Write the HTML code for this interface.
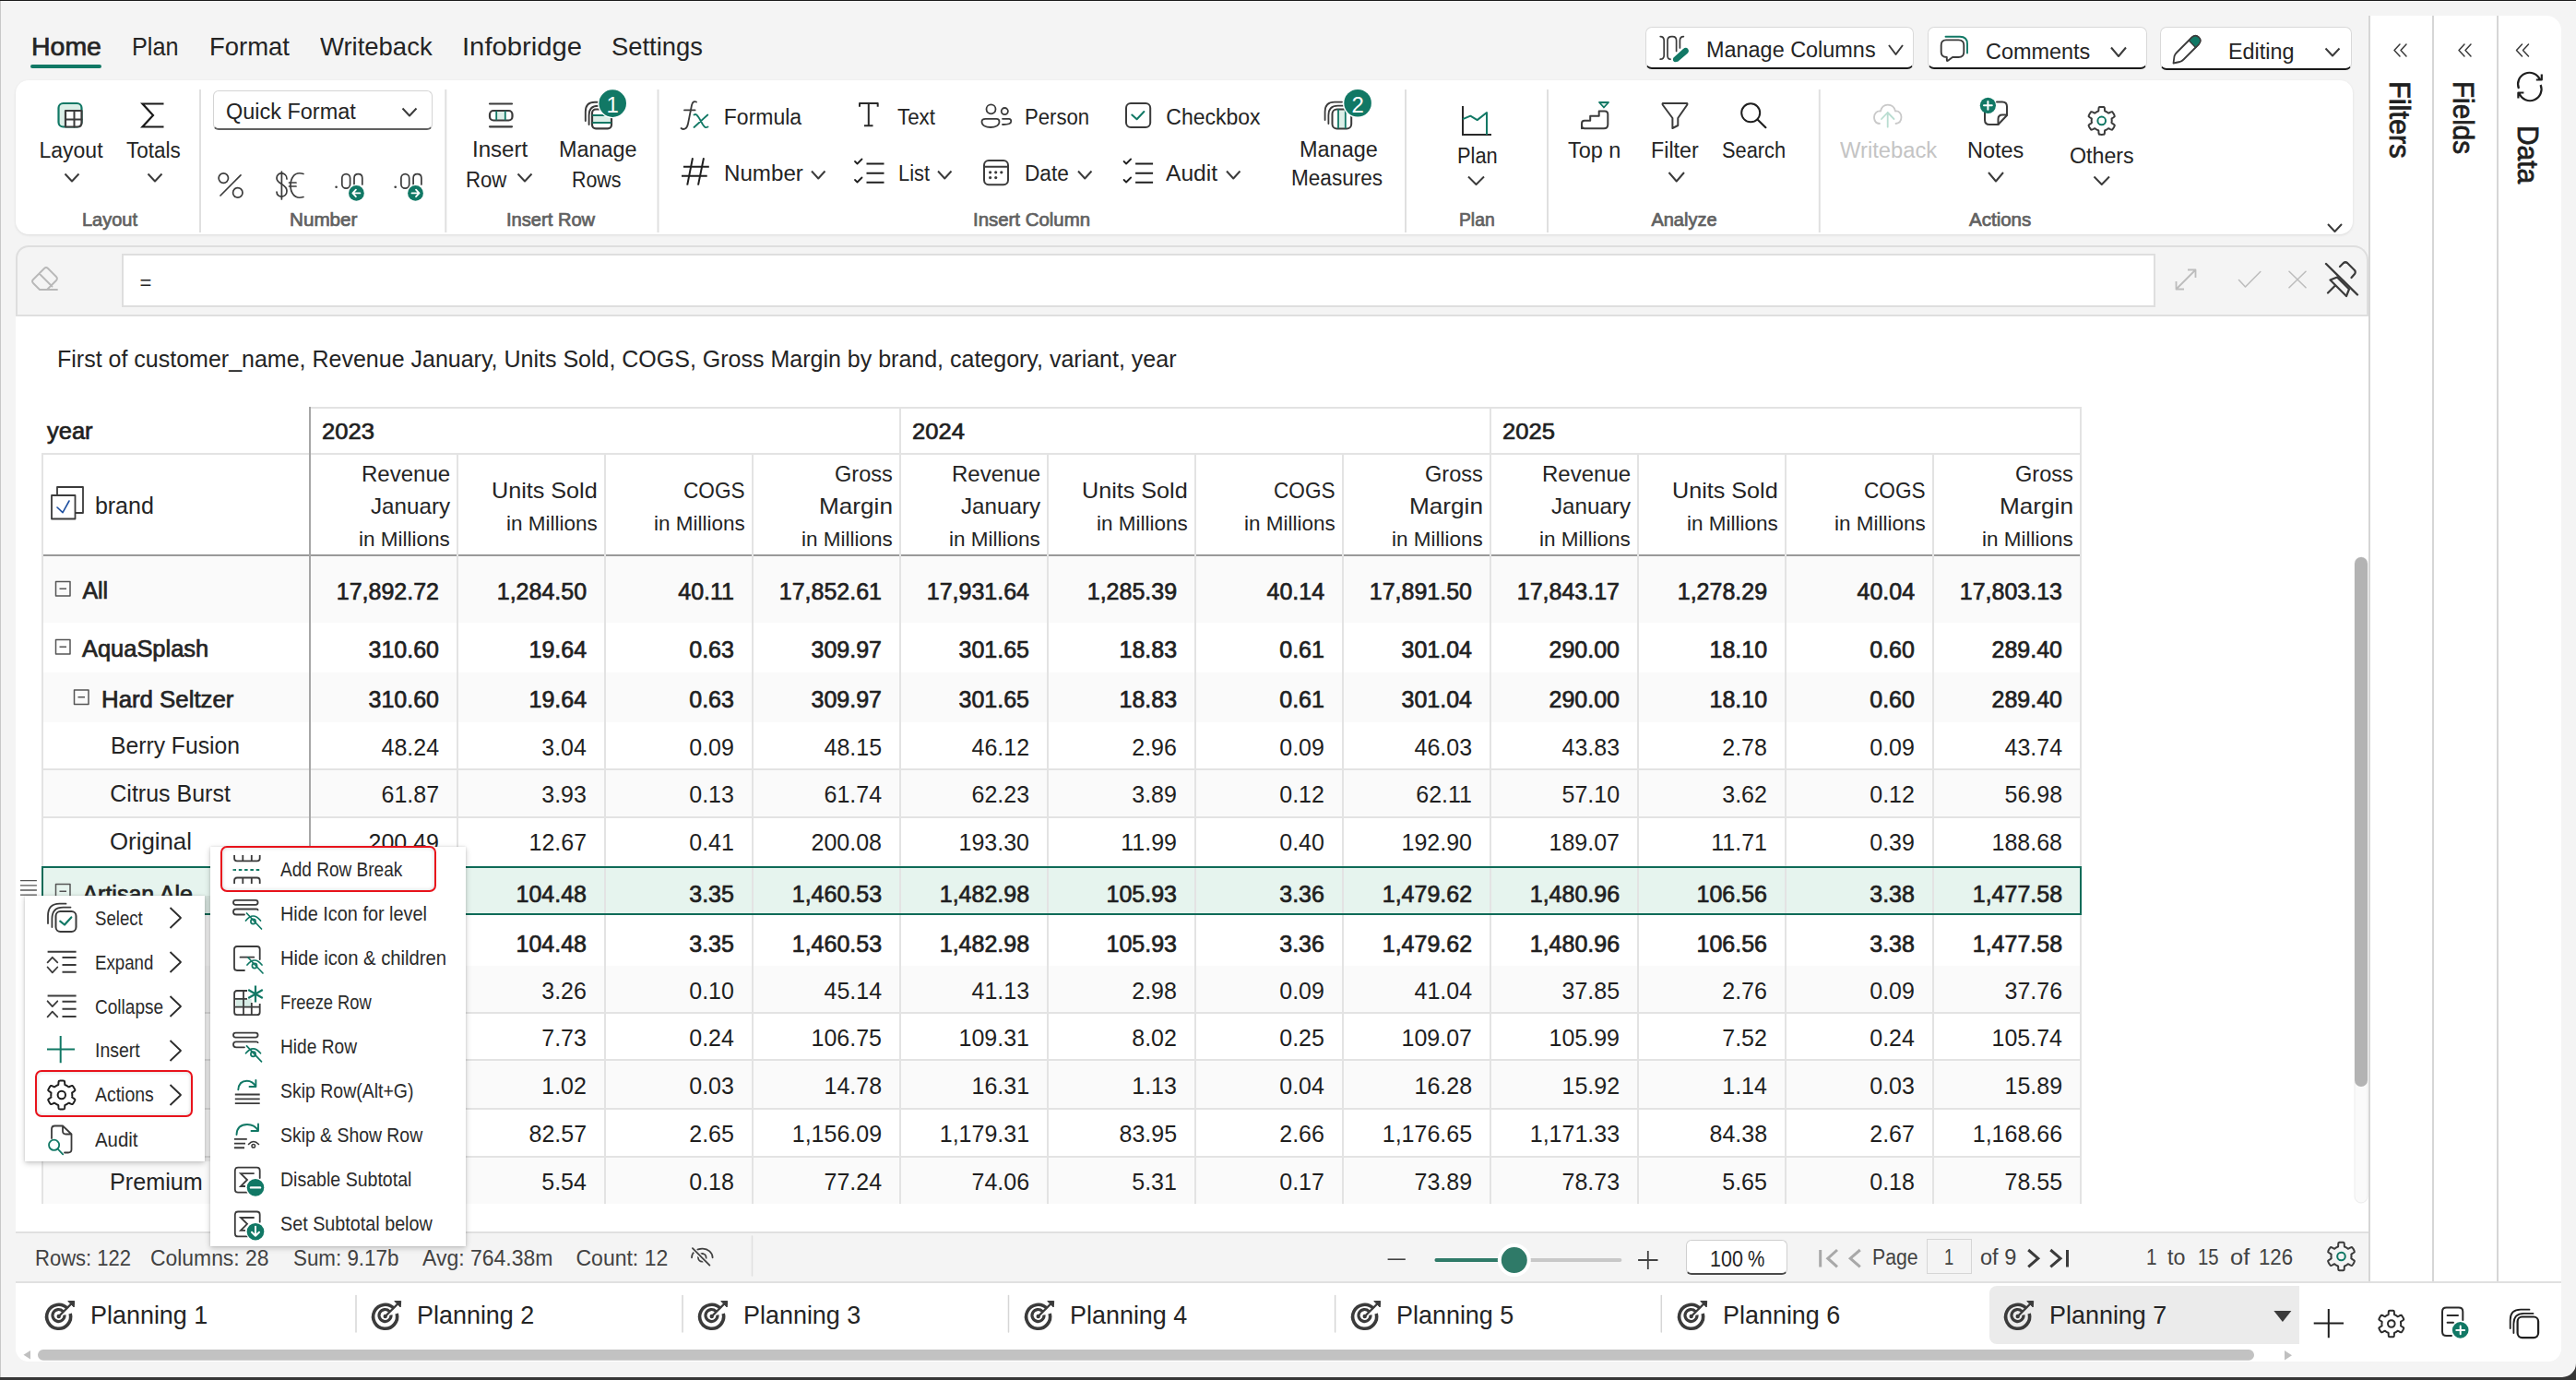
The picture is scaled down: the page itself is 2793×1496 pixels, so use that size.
<!DOCTYPE html>
<html><head><meta charset="utf-8"><style>
html,body{margin:0;padding:0;}
body{width:2793px;height:1496px;position:relative;overflow:hidden;background:#f4f4f4;font-family:"Liberation Sans",sans-serif;}
.t{position:absolute;white-space:pre;line-height:1;}
.b{position:absolute;box-sizing:border-box;}
</style></head><body>
<div class="b" style="left:0px;top:0px;width:2793px;height:1px;background:#1c1c1c"></div>
<div class="b" style="left:0px;top:1px;width:1px;height:1496px;background:#c8c8c8"></div>
<div class="b" style="left:0px;top:1493px;width:2793px;height:3px;background:#363636"></div>
<svg class="b" style="left:2770px;top:1470px" width="23" height="26"><path d="M8,23 A15,15 0 0,0 23,8 L23,26 L8,26 Z" fill="#363636"/></svg>
<div class="t" style="left:34.00px;top:37.30px;font-size:28px;font-weight:normal;color:#242424;transform:scaleX(1.0167);transform-origin:0 0;-webkit-text-stroke:0.7px #242424;">Home</div>
<div class="b" style="left:33px;top:70px;width:77px;height:4px;background:#117865;border-radius:2px"></div>
<div class="t" style="left:143.00px;top:37.30px;font-size:28px;font-weight:normal;color:#242424;transform:scaleX(0.9018);transform-origin:0 0;">Plan</div>
<div class="t" style="left:227.00px;top:37.30px;font-size:28px;font-weight:normal;color:#242424;transform:scaleX(0.9803);transform-origin:0 0;">Format</div>
<div class="t" style="left:347.40px;top:37.30px;font-size:28px;font-weight:normal;color:#242424;transform:scaleX(0.9811);transform-origin:0 0;">Writeback</div>
<div class="t" style="left:501.00px;top:37.30px;font-size:28px;font-weight:normal;color:#242424;transform:scaleX(1.0442);transform-origin:0 0;">Infobridge</div>
<div class="t" style="left:663.00px;top:37.30px;font-size:28px;font-weight:normal;color:#242424;transform:scaleX(0.9778);transform-origin:0 0;">Settings</div>
<div class="b" style="left:17px;top:87px;width:2534px;height:167px;background:#fff;border-radius:14px;box-shadow:0 1px 3px rgba(0,0,0,0.10)"></div>
<div class="b" style="left:2568px;top:17px;width:209px;height:1373px;background:#fff;border-top-right-radius:16px"></div>
<div class="b" style="left:2568px;top:17px;width:2px;height:1373px;background:#d6d6d6"></div>
<div class="b" style="left:2637px;top:17px;width:2px;height:1373px;background:#d6d6d6"></div>
<div class="b" style="left:2707px;top:17px;width:2px;height:1373px;background:#d6d6d6"></div>
<div class="b" style="left:17px;top:266px;width:2551px;height:77px;background:#f4f4f4;border:2px solid #dedede;border-bottom:none;border-radius:14px 16px 0 0"></div>
<div class="b" style="left:17px;top:341px;width:2551px;height:2px;background:#dedede"></div>
<div class="b" style="left:132px;top:275px;width:2205px;height:58px;background:#fff;border:2px solid #dedede"></div>
<div class="b" style="left:17px;top:343px;width:2551px;height:993px;background:#fff"></div>
<div class="b" style="left:17px;top:1335px;width:2551px;height:55px;background:#f4f4f4;border-top:2px solid #e0e0e0"></div>
<div class="b" style="left:17px;top:1389px;width:2760px;height:87px;background:#fff;border-top:2px solid #e0e0e0;border-radius:0 0 14px 14px"></div>
<div class="b" style="left:230.5px;top:97.7px;width:238px;height:43px;background:#fff;border:1.5px solid #d4d4d4;border-bottom:2px solid #616161;border-radius:6px"></div>
<div class="b" style="left:1784.3px;top:29.3px;width:291.0000000000002px;height:46.0px;background:#fff;border:1.5px solid #d9d9d9;border-bottom:2.5px solid #1a1a1a;border-radius:7px"></div>
<div class="b" style="left:2090.2px;top:29.3px;width:237.80000000000018px;height:46.0px;background:#fff;border:1.5px solid #d9d9d9;border-bottom:2.5px solid #1a1a1a;border-radius:7px"></div>
<div class="b" style="left:2342.3px;top:29px;width:207.5px;height:46.5px;background:#fff;border:1.5px solid #d9d9d9;border-bottom:2.5px solid #1a1a1a;border-radius:7px"></div>
<div class="t" style="left:42.50px;top:151.83px;font-size:23px;font-weight:normal;color:#242424;">Layout</div>
<div class="t" style="left:137.00px;top:151.83px;font-size:23px;font-weight:normal;color:#242424;transform:scaleX(0.9767);transform-origin:0 0;">Totals</div>
<div class="t" style="left:245.00px;top:109.93px;font-size:23px;font-weight:normal;color:#242424;transform:scaleX(1.0196);transform-origin:0 0;">Quick Format</div>
<div class="t" style="left:512.40px;top:151.33px;font-size:23px;font-weight:normal;color:#242424;transform:scaleX(1.0470);transform-origin:0 0;">Insert</div>
<div class="t" style="left:504.70px;top:184.33px;font-size:23px;font-weight:normal;color:#242424;transform:scaleX(0.9643);transform-origin:0 0;">Row</div>
<div class="t" style="left:606.40px;top:151.33px;font-size:23px;font-weight:normal;color:#242424;transform:scaleX(1.0162);transform-origin:0 0;">Manage</div>
<div class="t" style="left:620.00px;top:184.03px;font-size:23px;font-weight:normal;color:#242424;transform:scaleX(0.9304);transform-origin:0 0;">Rows</div>
<div class="t" style="left:784.80px;top:115.73px;font-size:23px;font-weight:normal;color:#242424;">Formula</div>
<div class="t" style="left:973.00px;top:115.73px;font-size:23px;font-weight:normal;color:#242424;transform:scaleX(0.9704);transform-origin:0 0;">Text</div>
<div class="t" style="left:1110.90px;top:115.73px;font-size:23px;font-weight:normal;color:#242424;transform:scaleX(0.9630);transform-origin:0 0;">Person</div>
<div class="t" style="left:1264.30px;top:115.73px;font-size:23px;font-weight:normal;color:#242424;">Checkbox</div>
<div class="t" style="left:784.80px;top:176.83px;font-size:23px;font-weight:normal;color:#242424;transform:scaleX(1.0495);transform-origin:0 0;">Number</div>
<div class="t" style="left:974.00px;top:176.83px;font-size:23px;font-weight:normal;color:#242424;transform:scaleX(0.9510);transform-origin:0 0;">List</div>
<div class="t" style="left:1110.90px;top:176.83px;font-size:23px;font-weight:normal;color:#242424;transform:scaleX(0.9856);transform-origin:0 0;">Date</div>
<div class="t" style="left:1264.30px;top:176.83px;font-size:23px;font-weight:normal;color:#242424;transform:scaleX(1.0686);transform-origin:0 0;">Audit</div>
<div class="t" style="left:1408.80px;top:151.13px;font-size:23px;font-weight:normal;color:#242424;transform:scaleX(1.0198);transform-origin:0 0;">Manage</div>
<div class="t" style="left:1399.60px;top:182.43px;font-size:23px;font-weight:normal;color:#242424;transform:scaleX(0.9812);transform-origin:0 0;">Measures</div>
<div class="t" style="left:1580.00px;top:157.73px;font-size:23px;font-weight:normal;color:#242424;transform:scaleX(0.9478);transform-origin:0 0;">Plan</div>
<div class="t" style="left:1700.30px;top:151.53px;font-size:23px;font-weight:normal;color:#242424;transform:scaleX(1.0204);transform-origin:0 0;">Top n</div>
<div class="t" style="left:1790.40px;top:151.53px;font-size:23px;font-weight:normal;color:#242424;transform:scaleX(1.0118);transform-origin:0 0;">Filter</div>
<div class="t" style="left:1866.80px;top:151.53px;font-size:23px;font-weight:normal;color:#242424;transform:scaleX(0.9479);transform-origin:0 0;">Search</div>
<div class="t" style="left:1994.60px;top:151.53px;font-size:23px;font-weight:normal;color:#c4c4c4;transform:scaleX(1.0324);transform-origin:0 0;">Writeback</div>
<div class="t" style="left:2133.00px;top:151.53px;font-size:23px;font-weight:normal;color:#242424;transform:scaleX(1.0200);transform-origin:0 0;">Notes</div>
<div class="t" style="left:2244.00px;top:157.73px;font-size:23px;font-weight:normal;color:#242424;transform:scaleX(1.0101);transform-origin:0 0;">Others</div>
<div class="t" style="left:89.00px;top:228.07px;font-size:20px;font-weight:normal;color:#616161;-webkit-text-stroke:0.7px #616161;">Layout</div>
<div class="t" style="left:314.00px;top:228.07px;font-size:20px;font-weight:normal;color:#616161;transform:scaleX(1.0330);transform-origin:0 0;-webkit-text-stroke:0.7px #616161;">Number</div>
<div class="t" style="left:549.30px;top:227.67px;font-size:20px;font-weight:normal;color:#616161;transform:scaleX(1.0057);transform-origin:0 0;-webkit-text-stroke:0.7px #616161;">Insert Row</div>
<div class="t" style="left:1054.80px;top:227.87px;font-size:20px;font-weight:normal;color:#616161;transform:scaleX(1.0201);transform-origin:0 0;-webkit-text-stroke:0.7px #616161;">Insert Column</div>
<div class="t" style="left:1582.00px;top:228.07px;font-size:20px;font-weight:normal;color:#616161;transform:scaleX(0.9650);transform-origin:0 0;-webkit-text-stroke:0.7px #616161;">Plan</div>
<div class="t" style="left:1790.40px;top:228.07px;font-size:20px;font-weight:normal;color:#616161;-webkit-text-stroke:0.7px #616161;">Analyze</div>
<div class="t" style="left:2135.00px;top:228.07px;font-size:20px;font-weight:normal;color:#616161;transform:scaleX(1.0260);transform-origin:0 0;-webkit-text-stroke:0.7px #616161;">Actions</div>
<div class="t" style="left:1850.00px;top:42.53px;font-size:23px;font-weight:normal;color:#242424;transform:scaleX(1.0186);transform-origin:0 0;">Manage Columns</div>
<div class="t" style="left:2153.00px;top:44.53px;font-size:23px;font-weight:normal;color:#242424;transform:scaleX(1.0184);transform-origin:0 0;">Comments</div>
<div class="t" style="left:2416.00px;top:44.53px;font-size:23px;font-weight:normal;color:#242424;transform:scaleX(1.0149);transform-origin:0 0;">Editing</div>
<svg class="b" style="left:0;top:0" width="2793" height="1496" viewBox="0 0 2793 1496" fill="none" stroke="#3b3b3b" stroke-width="2" stroke-linecap="round" stroke-linejoin="round"><line x1="217" y1="97" x2="217" y2="252" stroke="#e0e0e0" stroke-width="2" stroke-linecap="butt"/><line x1="483.3" y1="97" x2="483.3" y2="252" stroke="#e0e0e0" stroke-width="2" stroke-linecap="butt"/><line x1="713.5" y1="97" x2="713.5" y2="252" stroke="#e0e0e0" stroke-width="2" stroke-linecap="butt"/><line x1="1524" y1="97" x2="1524" y2="252" stroke="#e0e0e0" stroke-width="2" stroke-linecap="butt"/><line x1="1678" y1="97" x2="1678" y2="252" stroke="#e0e0e0" stroke-width="2" stroke-linecap="butt"/><line x1="1972.8" y1="97" x2="1972.8" y2="252" stroke="#e0e0e0" stroke-width="2" stroke-linecap="butt"/><rect x="63.5" y="112" width="25" height="25.5" rx="5" fill="#dcefe8" stroke="#117865" stroke-width="2.2"/><path d="M71,137.5 V120 H88.5 V133 Q88.5,137.5 84,137.5 Z" fill="#fff" stroke="#3b3b3b" stroke-width="2.2"/><line x1="80.5" y1="120" x2="80.5" y2="137.5" stroke="#3b3b3b" stroke-width="2"/><line x1="71" y1="129.5" x2="88.5" y2="129.5" stroke="#3b3b3b" stroke-width="2"/><polyline points="70.5,188.5 78.0,196.5 85.5,188.5" stroke="#3b3b3b" stroke-width="2" stroke-linecap="butt"/><path d="M177.5,112.5 H154.5 L166,125 L154.5,137.5 H177.5" stroke="#1a1a1a" stroke-width="2.2" stroke-linecap="butt" stroke-linejoin="miter"/><polyline points="160.5,188.5 168.0,196.5 175.5,188.5" stroke="#3b3b3b" stroke-width="2" stroke-linecap="butt"/><polyline points="436.5,117.5 444.0,125.5 451.5,117.5" stroke="#3b3b3b" stroke-width="2" stroke-linecap="butt"/><circle cx="242.3" cy="193.1" r="5.2" stroke-width="1.7"/><circle cx="257.8" cy="208.9" r="5.2" stroke-width="1.7"/><line x1="239" y1="212" x2="261" y2="189.8" stroke-width="1.7"/><path d="M311,194 C311,186 300,186 300,193 C300,200 311,199 311,207 C311,215 300,215 300,208" stroke-width="1.7"/><line x1="305.4" y1="186" x2="305.4" y2="216" stroke-width="1.7"/><path d="M329,188.5 C318,185 315,195 315,201 C315,207 318,217 329,213.5" stroke-width="1.7"/><line x1="313.5" y1="198" x2="321" y2="198" stroke-width="1.7"/><line x1="313.5" y1="202" x2="321" y2="202" stroke-width="1.7"/><circle cx="364.6" cy="202.8" r="1.3" fill="#3b3b3b" stroke="none"/><rect x="370.8" y="188.6" width="8.8" height="15.6" rx="4.4" stroke-width="1.7"/><path d="M384,200 V193 Q384,188.6 388.4,188.6 Q392.8,188.6 392.8,193 V200" stroke-width="1.7"/><circle cx="386.4" cy="209.4" r="9.6" fill="#fff" stroke="none"/><circle cx="386.4" cy="209.4" r="8.4" fill="#117865" stroke="none"/><path d="M390.4,209.4 H382.4 M385.9,205.6 L382.4,209.4 L385.9,213.2" stroke="#fff" stroke-width="1.8"/><circle cx="428.70000000000005" cy="202.8" r="1.3" fill="#3b3b3b" stroke="none"/><rect x="434.9" y="188.6" width="8.8" height="15.6" rx="4.4" stroke-width="1.7"/><path d="M448.1,200 V193 Q448.1,188.6 452.5,188.6 Q456.9,188.6 456.9,193 V200" stroke-width="1.7"/><circle cx="450.5" cy="209.4" r="9.6" fill="#fff" stroke="none"/><circle cx="450.5" cy="209.4" r="8.4" fill="#117865" stroke="none"/><path d="M446.5,209.4 H454.5 M451.0,205.6 L454.5,209.4 L451.0,213.2" stroke="#fff" stroke-width="1.8"/><line x1="531" y1="112.5" x2="555" y2="112.5" stroke-width="2.2"/><line x1="531" y1="137.3" x2="555" y2="137.3" stroke-width="2.2"/><rect x="538" y="120" width="10" height="10" fill="#dcefe8" stroke="none"/><rect x="531" y="120" width="24.5" height="10.5" rx="4" stroke-width="2.2"/><line x1="538.2" y1="121" x2="538.2" y2="129.5" stroke="#117865" stroke-width="1.8"/><line x1="547.8" y1="121" x2="547.8" y2="129.5" stroke="#117865" stroke-width="1.8"/><polyline points="561.5,188.5 569.0,196.5 576.5,188.5" stroke="#3b3b3b" stroke-width="2" stroke-linecap="butt"/><path d="M634.8,131 V121 Q634.8,110.7 645,110.7 H651 M638.6,135 V125 Q638.6,114.7 648.5,114.7 H653" stroke-width="1.9"/><rect x="642" y="125" width="21" height="8" fill="#dcefe8" stroke="none"/><rect x="642" y="118.5" width="21" height="20.8" rx="4" fill="none" stroke-width="2.2"/><line x1="643" y1="125" x2="662" y2="125" stroke="#117865" stroke-width="1.8"/><line x1="643" y1="133" x2="662" y2="133" stroke="#117865" stroke-width="1.8"/><circle cx="664.2" cy="112.1" r="16.2" fill="#fff" stroke="none"/><circle cx="664.2" cy="112.1" r="14.8" fill="#117865" stroke="none"/><text x="664.2" y="121.9" font-family="Liberation Sans" font-size="24" fill="#fff" stroke="none" text-anchor="middle">1</text><path d="M738.5,139 C741,141 745,140 746,134 L750,114 C751,110 753,109.5 755,110.5" stroke-width="1.8"/><line x1="742" y1="119.4" x2="753.6" y2="119.4" stroke-width="1.8"/><path d="M752.5,124.5 C755,123 756,125 758,128 L762,135 C764,138 765,139 767.5,137.5 M752.5,138 L767.3,124.5" stroke="#117865" stroke-width="1.8"/><path d="M932,115.7 V112 H951.7 V115.7 M941.8,112 V136.2 M937,136.2 H946.5" stroke="#2a2a2a" stroke-width="2" stroke-linecap="butt"/><circle cx="1074.5" cy="118.3" r="5" stroke-width="1.8"/><path d="M1064.5,132 C1064.5,129.5 1066,128.8 1068.5,128.8 H1080.5 C1083,128.8 1083.5,130 1083.5,132 C1083.5,136 1079,138 1074,138 C1069,138 1064.5,136 1064.5,132 Z" stroke-width="1.8"/><circle cx="1089.3" cy="120.6" r="3.6" stroke-width="1.8"/><path d="M1087,128.8 H1094 C1096,128.8 1096.3,130 1096.3,131.5 C1096.3,134 1093,135.2 1087,135" stroke-width="1.8"/><rect x="1221" y="112" width="26.2" height="26" rx="5" stroke-width="2"/><path d="M1227.3,124.5 L1232.6,129.3 L1240.4,121" stroke="#117865" stroke-width="2"/><path d="M741,180.7 H768.8 M739,190.7 H766.7 M751,171.3 L745.2,200.6 M763,171.3 L757,200.6" stroke="#1f1f1f" stroke-width="2" stroke-linecap="butt"/><polyline points="880,185.5 887.25,193.5 894.5,185.5" stroke="#3b3b3b" stroke-width="2" stroke-linecap="butt"/><path d="M927,175 L929.5,177.5 L934.5,172.5 M927,195 L929.5,197.5 L934.5,192.5" stroke="#1f1f1f" stroke-width="1.8"/><path d="M939.5,177.6 H958.5 M939.5,187.7 H958.5 M939.5,197.8 H958.5" stroke="#1f1f1f" stroke-width="2" stroke-linecap="butt"/><path d="M1218.6,175 L1221.1,177.5 L1226.1,172.5 M1218.6,195 L1221.1,197.5 L1226.1,192.5" stroke="#1f1f1f" stroke-width="1.8"/><path d="M1231.1,177.6 H1250.1 M1231.1,187.7 H1250.1 M1231.1,197.8 H1250.1" stroke="#1f1f1f" stroke-width="2" stroke-linecap="butt"/><polyline points="1017,185.5 1024.25,193.5 1031.5,185.5" stroke="#3b3b3b" stroke-width="2" stroke-linecap="butt"/><polyline points="1169,185.5 1176.25,193.5 1183.5,185.5" stroke="#3b3b3b" stroke-width="2" stroke-linecap="butt"/><polyline points="1330,185.5 1337.25,193.5 1344.5,185.5" stroke="#3b3b3b" stroke-width="2" stroke-linecap="butt"/><rect x="1067" y="174" width="26" height="26.2" rx="5" stroke-width="2"/><line x1="1067" y1="180.7" x2="1093" y2="180.7" stroke-width="2"/><circle cx="1073.6" cy="186.8" r="1.6" fill="#3b3b3b" stroke="none"/><circle cx="1079.7" cy="186.8" r="1.6" fill="#3b3b3b" stroke="none"/><circle cx="1085.8" cy="186.8" r="1.6" fill="#3b3b3b" stroke="none"/><circle cx="1073.6" cy="192.6" r="1.6" fill="#3b3b3b" stroke="none"/><circle cx="1079.7" cy="192.6" r="1.6" fill="#3b3b3b" stroke="none"/><path d="M1436.6,130 V121 Q1436.6,110.6 1447,110.6 H1455 M1440.4,134 V125 Q1440.4,114.6 1450.5,114.6 H1456.5" stroke-width="1.8"/><rect x="1451" y="118.5" width="8" height="21" fill="#dcefe8" stroke="none"/><rect x="1444.5" y="118.5" width="20.7" height="21" rx="5" fill="none" stroke-width="2"/><line x1="1451" y1="119" x2="1451" y2="138.5" stroke="#117865" stroke-width="1.8"/><line x1="1458.8" y1="119" x2="1458.8" y2="138.5" stroke="#117865" stroke-width="1.8"/><circle cx="1472.1" cy="111.8" r="16.2" fill="#fff" stroke="none"/><circle cx="1472.1" cy="111.8" r="14.8" fill="#117865" stroke="none"/><text x="1472.1" y="121.8" font-family="Liberation Sans" font-size="24" fill="#fff" stroke="none" text-anchor="middle">2</text><path d="M1586,115 V146 H1617" stroke="#2a2a2a" stroke-width="2" stroke-linecap="butt" stroke-linejoin="miter"/><path d="M1586,129.2 L1594.3,125.7 L1601.7,130.1 L1612,122 V146" stroke="#117865" stroke-width="2" stroke-linecap="butt"/><polyline points="1592,191.5 1600.5,200 1609,191.5" stroke="#3b3b3b" stroke-width="2" stroke-linecap="butt"/><path d="M1715,139.3 V134 Q1715,130.8 1718,130.8 H1724.2 V125.7 H1733.7 V120.4 H1740 Q1743.3,120.4 1743.3,124 V135 Q1743.3,139.3 1739,139.3 H1718 Q1715,139.3 1715,136" stroke-width="2"/><path d="M1734,111 H1744 L1739,116.5 Z" fill="#dcefe8" stroke="#117865" stroke-width="1.8"/><path d="M1803,112 H1829 Q1830,112.5 1829,114 L1819.3,128 V136 L1813.4,139 V128 L1803,114 Q1802,112.5 1803,112 Z" stroke-width="2"/><polyline points="1809.5,187 1817.75,196.5 1826,187" stroke="#3b3b3b" stroke-width="2" stroke-linecap="butt"/><circle cx="1898.2" cy="122.3" r="10" stroke="#1f1f1f" stroke-width="2"/><line x1="1905.5" y1="129.5" x2="1914.4" y2="138.2" stroke="#1f1f1f" stroke-width="2.2"/><path d="M2038,134 C2033,133.5 2032,130 2032,127 C2032,123 2035,120 2039,120.5 C2040,116 2043,113.7 2046.8,113.7 C2051,113.7 2054,116 2055,120.5 C2059,120 2061.5,123 2061.5,127 C2061.5,130 2060,133.5 2055.5,134" stroke="#c9c9c9" stroke-width="1.8"/><path d="M2046.7,137.7 V122 M2040,129 L2046.7,122 L2053.5,129" stroke="#b9ddd1" stroke-width="1.8"/><path d="M2165,110.5 H2171 Q2176,110.5 2176,115.5 V125 L2166.5,135 H2157 Q2152,135 2152,130 V122" stroke-width="2"/><path d="M2176,124.5 H2171 Q2166.5,124.5 2166.5,129 V135" stroke-width="2"/><circle cx="2155.4" cy="114.3" r="8.6" fill="#117865" stroke="none"/><path d="M2151,114.3 H2159.8 M2155.4,109.9 V118.7" stroke="#fff" stroke-width="2"/><polyline points="2156,187 2164.0,196.5 2172,187" stroke="#3b3b3b" stroke-width="2" stroke-linecap="butt"/><path d="M2289.70,130.90 L2289.70,131.09 L2289.69,131.28 L2289.68,131.48 L2289.67,131.67 L2289.66,131.86 L2289.64,132.05 L2289.62,132.24 L2289.59,132.43 L2289.56,132.62 L2289.53,132.81 L2289.50,133.00 L2289.58,133.21 L2289.87,133.48 L2290.34,133.80 L2290.92,134.17 L2291.53,134.58 L2292.09,134.99 L2292.52,135.39 L2292.77,135.74 L2292.80,136.03 L2292.70,136.28 L2292.61,136.52 L2292.51,136.76 L2292.40,137.00 L2292.29,137.24 L2292.18,137.48 L2292.07,137.71 L2291.94,137.94 L2291.82,138.17 L2291.69,138.40 L2291.56,138.63 L2291.42,138.85 L2291.28,139.07 L2291.14,139.29 L2290.99,139.50 L2290.84,139.72 L2290.68,139.93 L2290.52,140.13 L2290.36,140.34 L2290.19,140.54 L2289.93,140.66 L2289.50,140.62 L2288.94,140.45 L2288.30,140.17 L2287.65,139.85 L2287.04,139.53 L2286.52,139.29 L2286.14,139.16 L2285.92,139.20 L2285.77,139.33 L2285.62,139.45 L2285.47,139.57 L2285.32,139.68 L2285.17,139.80 L2285.01,139.91 L2284.85,140.02 L2284.69,140.13 L2284.53,140.23 L2284.37,140.33 L2284.20,140.43 L2284.03,140.52 L2283.86,140.61 L2283.69,140.70 L2283.52,140.79 L2283.35,140.87 L2283.17,140.95 L2283.00,141.03 L2282.82,141.10 L2282.64,141.17 L2282.46,141.24 L2282.28,141.30 L2282.14,141.48 L2282.05,141.87 L2282.01,142.44 L2281.97,143.12 L2281.93,143.85 L2281.85,144.54 L2281.72,145.11 L2281.54,145.51 L2281.30,145.67 L2281.05,145.72 L2280.79,145.75 L2280.53,145.79 L2280.27,145.82 L2280.01,145.84 L2279.75,145.86 L2279.49,145.88 L2279.22,145.89 L2278.96,145.90 L2278.70,145.90 L2278.44,145.90 L2278.18,145.89 L2277.91,145.88 L2277.65,145.86 L2277.39,145.84 L2277.13,145.82 L2276.87,145.79 L2276.61,145.75 L2276.35,145.72 L2276.10,145.67 L2275.86,145.51 L2275.68,145.11 L2275.55,144.54 L2275.47,143.85 L2275.43,143.12 L2275.39,142.44 L2275.35,141.87 L2275.26,141.48 L2275.12,141.30 L2274.94,141.24 L2274.76,141.17 L2274.58,141.10 L2274.40,141.03 L2274.23,140.95 L2274.05,140.87 L2273.88,140.79 L2273.71,140.70 L2273.54,140.61 L2273.37,140.52 L2273.20,140.43 L2273.03,140.33 L2272.87,140.23 L2272.71,140.13 L2272.55,140.02 L2272.39,139.91 L2272.23,139.80 L2272.08,139.68 L2271.93,139.57 L2271.78,139.45 L2271.63,139.33 L2271.48,139.20 L2271.26,139.16 L2270.88,139.29 L2270.36,139.53 L2269.75,139.85 L2269.10,140.17 L2268.46,140.45 L2267.90,140.62 L2267.47,140.66 L2267.21,140.54 L2267.04,140.34 L2266.88,140.13 L2266.72,139.93 L2266.56,139.72 L2266.41,139.50 L2266.26,139.29 L2266.12,139.07 L2265.98,138.85 L2265.84,138.63 L2265.71,138.40 L2265.58,138.17 L2265.46,137.94 L2265.33,137.71 L2265.22,137.48 L2265.11,137.24 L2265.00,137.00 L2264.89,136.76 L2264.79,136.52 L2264.70,136.28 L2264.60,136.03 L2264.63,135.74 L2264.88,135.39 L2265.31,134.99 L2265.87,134.58 L2266.48,134.17 L2267.06,133.80 L2267.53,133.48 L2267.82,133.21 L2267.90,133.00 L2267.87,132.81 L2267.84,132.62 L2267.81,132.43 L2267.78,132.24 L2267.76,132.05 L2267.74,131.86 L2267.73,131.67 L2267.72,131.48 L2267.71,131.28 L2267.70,131.09 L2267.70,130.90 L2267.70,130.71 L2267.71,130.52 L2267.72,130.32 L2267.73,130.13 L2267.74,129.94 L2267.76,129.75 L2267.78,129.56 L2267.81,129.37 L2267.84,129.18 L2267.87,128.99 L2267.90,128.80 L2267.82,128.59 L2267.53,128.32 L2267.06,128.00 L2266.48,127.63 L2265.87,127.22 L2265.31,126.81 L2264.88,126.41 L2264.63,126.06 L2264.60,125.77 L2264.70,125.52 L2264.79,125.28 L2264.89,125.04 L2265.00,124.80 L2265.11,124.56 L2265.22,124.32 L2265.33,124.09 L2265.46,123.86 L2265.58,123.63 L2265.71,123.40 L2265.84,123.17 L2265.98,122.95 L2266.12,122.73 L2266.26,122.51 L2266.41,122.30 L2266.56,122.08 L2266.72,121.87 L2266.88,121.67 L2267.04,121.46 L2267.21,121.26 L2267.47,121.14 L2267.90,121.18 L2268.46,121.35 L2269.10,121.63 L2269.75,121.95 L2270.36,122.27 L2270.88,122.51 L2271.26,122.64 L2271.48,122.60 L2271.63,122.47 L2271.78,122.35 L2271.93,122.23 L2272.08,122.12 L2272.23,122.00 L2272.39,121.89 L2272.55,121.78 L2272.71,121.67 L2272.87,121.57 L2273.03,121.47 L2273.20,121.37 L2273.37,121.28 L2273.54,121.19 L2273.71,121.10 L2273.88,121.01 L2274.05,120.93 L2274.23,120.85 L2274.40,120.77 L2274.58,120.70 L2274.76,120.63 L2274.94,120.56 L2275.12,120.50 L2275.26,120.32 L2275.35,119.93 L2275.39,119.36 L2275.43,118.68 L2275.47,117.95 L2275.55,117.26 L2275.68,116.69 L2275.86,116.29 L2276.10,116.13 L2276.35,116.08 L2276.61,116.05 L2276.87,116.01 L2277.13,115.98 L2277.39,115.96 L2277.65,115.94 L2277.91,115.92 L2278.18,115.91 L2278.44,115.90 L2278.70,115.90 L2278.96,115.90 L2279.22,115.91 L2279.49,115.92 L2279.75,115.94 L2280.01,115.96 L2280.27,115.98 L2280.53,116.01 L2280.79,116.05 L2281.05,116.08 L2281.30,116.13 L2281.54,116.29 L2281.72,116.69 L2281.85,117.26 L2281.93,117.95 L2281.97,118.68 L2282.01,119.36 L2282.05,119.93 L2282.14,120.32 L2282.28,120.50 L2282.46,120.56 L2282.64,120.63 L2282.82,120.70 L2283.00,120.77 L2283.17,120.85 L2283.35,120.93 L2283.52,121.01 L2283.69,121.10 L2283.86,121.19 L2284.03,121.28 L2284.20,121.37 L2284.37,121.47 L2284.53,121.57 L2284.69,121.67 L2284.85,121.78 L2285.01,121.89 L2285.17,122.00 L2285.32,122.12 L2285.47,122.23 L2285.62,122.35 L2285.77,122.47 L2285.92,122.60 L2286.14,122.64 L2286.52,122.51 L2287.04,122.27 L2287.65,121.95 L2288.30,121.63 L2288.94,121.35 L2289.50,121.18 L2289.93,121.14 L2290.19,121.26 L2290.36,121.46 L2290.52,121.67 L2290.68,121.87 L2290.84,122.08 L2290.99,122.30 L2291.14,122.51 L2291.28,122.73 L2291.42,122.95 L2291.56,123.17 L2291.69,123.40 L2291.82,123.63 L2291.94,123.86 L2292.07,124.09 L2292.18,124.32 L2292.29,124.56 L2292.40,124.80 L2292.51,125.04 L2292.61,125.28 L2292.70,125.52 L2292.80,125.77 L2292.77,126.06 L2292.52,126.41 L2292.09,126.81 L2291.53,127.22 L2290.92,127.63 L2290.34,128.00 L2289.87,128.32 L2289.58,128.59 L2289.50,128.80 L2289.53,128.99 L2289.56,129.18 L2289.59,129.37 L2289.62,129.56 L2289.64,129.75 L2289.66,129.94 L2289.67,130.13 L2289.68,130.32 L2289.69,130.52 L2289.70,130.71Z" stroke="#3b3b3b" stroke-width="2"/><circle cx="2278.7" cy="130.9" r="4.3" stroke="#117865" stroke-width="2"/><polyline points="2270.5,191.5 2278.75,200 2287,191.5" stroke="#3b3b3b" stroke-width="2" stroke-linecap="butt"/><polyline points="2524,243 2531.5,251 2539,243" stroke="#3b3b3b" stroke-width="2" stroke-linecap="butt"/><path d="M1800.2,39.6 Q1804.2,39.6 1804.2,44 V60 Q1804.2,64.2 1800.2,64.2" stroke="#3b3b3b" stroke-width="1.7"/><path d="M1811,64.2 Q1808,64.2 1808,60 V44 Q1808,39.6 1812.5,39.6 H1813.5 Q1817.6,39.6 1817.6,44 V55.5" stroke="#3b3b3b" stroke-width="1.7"/><path d="M1821.4,52 V44 Q1821.4,39.6 1825.4,39.6" stroke="#3b3b3b" stroke-width="1.7"/><path d="M1816,66.5 Q1814,66 1815,63 L1825.5,53.5 Q1828,51.5 1829.5,53.5 Q1831,55.5 1829,57.5 L1819,66 Z" fill="#117865" stroke="#117865" stroke-width="1.5"/><polyline points="2048,49 2055.5,59 2063,49" stroke="#3b3b3b" stroke-width="2" stroke-linecap="butt"/><path d="M2109.5,39.7 H2125 Q2133,39.7 2133,47.5 V57.5" stroke="#117865" stroke-width="1.9"/><path d="M2110,43.4 H2123.5 Q2129.3,43.4 2129.3,49 V56.5 Q2129.3,62 2123.5,62 H2117 L2112,65.8 Q2110.8,66.5 2110.8,65 V62 Q2104.7,62 2104.7,56.5 V49 Q2104.7,43.4 2110,43.4 Z" stroke-width="1.9"/><polyline points="2289,51.5 2297.0,61 2305,51.5" stroke="#3b3b3b" stroke-width="2" stroke-linecap="butt"/><path d="M2356.5,68.5 L2357.5,61 Q2358,59 2360,57 L2376.5,40.5 Q2380.5,37 2384,40.5 Q2387.5,44 2384,48 L2367.5,64.5 Q2365.5,66.5 2363.5,67 Z" stroke-width="1.8"/><path d="M2376.5,40.5 Q2380.5,37 2384,40.5 Q2387.5,44 2384,48 L2380.5,51.5 L2373.3,44 Z" fill="#117865" stroke="#3b3b3b" stroke-width="1.2"/><polyline points="2521.5,52.5 2529.0,60.5 2536.5,52.5" stroke="#3b3b3b" stroke-width="2" stroke-linecap="butt"/></svg>
<div class="t" style="left:62.00px;top:376.84px;font-size:25px;font-weight:normal;color:#242424;">First of customer_name, Revenue January, Units Sold, COGS, Gross Margin by brand, category, variant, year</div>
<div class="b" style="left:46px;top:602px;width:2210px;height:73px;background:#fafafa"></div>
<div class="b" style="left:46px;top:729px;width:2210px;height:54px;background:#fafafa"></div>
<div class="b" style="left:46px;top:834px;width:2210px;height:52px;background:#fafafa"></div>
<div class="b" style="left:46px;top:1047px;width:2210px;height:51px;background:#fafafa"></div>
<div class="b" style="left:46px;top:1149px;width:2210px;height:53px;background:#fafafa"></div>
<div class="b" style="left:46px;top:1254px;width:2210px;height:51px;background:#fafafa"></div>
<div class="b" style="left:45px;top:939px;width:2212px;height:53px;background:#e6f4ee"></div>
<div class="b" style="left:46px;top:833px;width:2210px;height:2px;background:#e3e3e3"></div>
<div class="b" style="left:46px;top:885px;width:2210px;height:2px;background:#e3e3e3"></div>
<div class="b" style="left:46px;top:1097px;width:2210px;height:2px;background:#e3e3e3"></div>
<div class="b" style="left:46px;top:1148px;width:2210px;height:2px;background:#e3e3e3"></div>
<div class="b" style="left:46px;top:1201px;width:2210px;height:2px;background:#e3e3e3"></div>
<div class="b" style="left:46px;top:1253px;width:2210px;height:2px;background:#e3e3e3"></div>
<div class="b" style="left:336px;top:441px;width:1920px;height:2px;background:#e3e3e3"></div>
<div class="b" style="left:46px;top:491px;width:2210px;height:2px;background:#e3e3e3"></div>
<div class="b" style="left:46px;top:601px;width:2210px;height:2px;background:#999"></div>
<div class="b" style="left:45px;top:491px;width:2px;height:814px;background:#e3e3e3"></div>
<div class="b" style="left:2255px;top:441px;width:2px;height:864px;background:#e3e3e3"></div>
<div class="b" style="left:495px;top:491px;width:2px;height:814px;background:#e3e3e3"></div>
<div class="b" style="left:655px;top:491px;width:2px;height:814px;background:#e3e3e3"></div>
<div class="b" style="left:815px;top:491px;width:2px;height:814px;background:#e3e3e3"></div>
<div class="b" style="left:975px;top:441px;width:2px;height:864px;background:#e3e3e3"></div>
<div class="b" style="left:1135px;top:491px;width:2px;height:814px;background:#e3e3e3"></div>
<div class="b" style="left:1295px;top:491px;width:2px;height:814px;background:#e3e3e3"></div>
<div class="b" style="left:1455px;top:491px;width:2px;height:814px;background:#e3e3e3"></div>
<div class="b" style="left:1615px;top:441px;width:2px;height:864px;background:#e3e3e3"></div>
<div class="b" style="left:1775px;top:491px;width:2px;height:814px;background:#e3e3e3"></div>
<div class="b" style="left:1935px;top:491px;width:2px;height:814px;background:#e3e3e3"></div>
<div class="b" style="left:2095px;top:491px;width:2px;height:814px;background:#e3e3e3"></div>
<div class="b" style="left:335px;top:441px;width:2px;height:864px;background:#a6a6a6"></div>
<div class="b" style="left:45px;top:939px;width:2212px;height:53px;border:2px solid #0f6b58"></div>
<div class="t" style="left:51.20px;top:454.54px;font-size:25px;font-weight:normal;color:#1f1f1f;transform:scaleX(1.0195);transform-origin:0 0;-webkit-text-stroke:0.7px #1f1f1f;">year</div>
<div class="t" style="left:102.90px;top:535.54px;font-size:25px;font-weight:normal;color:#242424;">brand</div>
<div class="t" style="left:349.00px;top:455.68px;font-size:24px;font-weight:normal;color:#1f1f1f;transform:scaleX(1.0654);transform-origin:0 0;-webkit-text-stroke:0.7px #1f1f1f;">2023</div>
<div class="t" style="left:989.00px;top:455.68px;font-size:24px;font-weight:normal;color:#1f1f1f;transform:scaleX(1.0654);transform-origin:0 0;-webkit-text-stroke:0.7px #1f1f1f;">2024</div>
<div class="t" style="left:1629.00px;top:455.68px;font-size:24px;font-weight:normal;color:#1f1f1f;transform:scaleX(1.0654);transform-origin:0 0;-webkit-text-stroke:0.7px #1f1f1f;">2025</div>
<div class="t" style="left:392.00px;top:501.88px;font-size:24px;font-weight:normal;color:#242424;">Revenue</div>
<div class="t" style="left:401.80px;top:536.68px;font-size:24px;font-weight:normal;color:#242424;transform:scaleX(1.0082);transform-origin:0 0;">January</div>
<div class="t" style="left:389.40px;top:573.98px;font-size:22px;font-weight:normal;color:#242424;transform:scaleX(1.0218);transform-origin:0 0;">in Millions</div>
<div class="t" style="left:533.20px;top:519.98px;font-size:24px;font-weight:normal;color:#242424;transform:scaleX(1.0484);transform-origin:0 0;">Units Sold</div>
<div class="t" style="left:549.40px;top:557.08px;font-size:22px;font-weight:normal;color:#242424;transform:scaleX(1.0218);transform-origin:0 0;">in Millions</div>
<div class="t" style="left:741.40px;top:519.98px;font-size:24px;font-weight:normal;color:#242424;transform:scaleX(0.9413);transform-origin:0 0;">COGS</div>
<div class="t" style="left:709.40px;top:557.08px;font-size:22px;font-weight:normal;color:#242424;transform:scaleX(1.0218);transform-origin:0 0;">in Millions</div>
<div class="t" style="left:905.20px;top:501.88px;font-size:24px;font-weight:normal;color:#242424;transform:scaleX(0.9812);transform-origin:0 0;">Gross</div>
<div class="t" style="left:888.20px;top:536.68px;font-size:24px;font-weight:normal;color:#242424;transform:scaleX(1.0894);transform-origin:0 0;">Margin</div>
<div class="t" style="left:869.40px;top:573.98px;font-size:22px;font-weight:normal;color:#242424;transform:scaleX(1.0218);transform-origin:0 0;">in Millions</div>
<div class="t" style="left:1032.00px;top:501.88px;font-size:24px;font-weight:normal;color:#242424;">Revenue</div>
<div class="t" style="left:1041.80px;top:536.68px;font-size:24px;font-weight:normal;color:#242424;transform:scaleX(1.0082);transform-origin:0 0;">January</div>
<div class="t" style="left:1029.40px;top:573.98px;font-size:22px;font-weight:normal;color:#242424;transform:scaleX(1.0218);transform-origin:0 0;">in Millions</div>
<div class="t" style="left:1173.20px;top:519.98px;font-size:24px;font-weight:normal;color:#242424;transform:scaleX(1.0484);transform-origin:0 0;">Units Sold</div>
<div class="t" style="left:1189.40px;top:557.08px;font-size:22px;font-weight:normal;color:#242424;transform:scaleX(1.0218);transform-origin:0 0;">in Millions</div>
<div class="t" style="left:1381.40px;top:519.98px;font-size:24px;font-weight:normal;color:#242424;transform:scaleX(0.9413);transform-origin:0 0;">COGS</div>
<div class="t" style="left:1349.40px;top:557.08px;font-size:22px;font-weight:normal;color:#242424;transform:scaleX(1.0218);transform-origin:0 0;">in Millions</div>
<div class="t" style="left:1545.20px;top:501.88px;font-size:24px;font-weight:normal;color:#242424;transform:scaleX(0.9812);transform-origin:0 0;">Gross</div>
<div class="t" style="left:1528.20px;top:536.68px;font-size:24px;font-weight:normal;color:#242424;transform:scaleX(1.0894);transform-origin:0 0;">Margin</div>
<div class="t" style="left:1509.40px;top:573.98px;font-size:22px;font-weight:normal;color:#242424;transform:scaleX(1.0218);transform-origin:0 0;">in Millions</div>
<div class="t" style="left:1672.00px;top:501.88px;font-size:24px;font-weight:normal;color:#242424;">Revenue</div>
<div class="t" style="left:1681.80px;top:536.68px;font-size:24px;font-weight:normal;color:#242424;transform:scaleX(1.0082);transform-origin:0 0;">January</div>
<div class="t" style="left:1669.40px;top:573.98px;font-size:22px;font-weight:normal;color:#242424;transform:scaleX(1.0218);transform-origin:0 0;">in Millions</div>
<div class="t" style="left:1813.20px;top:519.98px;font-size:24px;font-weight:normal;color:#242424;transform:scaleX(1.0484);transform-origin:0 0;">Units Sold</div>
<div class="t" style="left:1829.40px;top:557.08px;font-size:22px;font-weight:normal;color:#242424;transform:scaleX(1.0218);transform-origin:0 0;">in Millions</div>
<div class="t" style="left:2021.40px;top:519.98px;font-size:24px;font-weight:normal;color:#242424;transform:scaleX(0.9413);transform-origin:0 0;">COGS</div>
<div class="t" style="left:1989.40px;top:557.08px;font-size:22px;font-weight:normal;color:#242424;transform:scaleX(1.0218);transform-origin:0 0;">in Millions</div>
<div class="t" style="left:2185.20px;top:501.88px;font-size:24px;font-weight:normal;color:#242424;transform:scaleX(0.9813);transform-origin:0 0;">Gross</div>
<div class="t" style="left:2168.20px;top:536.68px;font-size:24px;font-weight:normal;color:#242424;transform:scaleX(1.0894);transform-origin:0 0;">Margin</div>
<div class="t" style="left:2149.40px;top:573.98px;font-size:22px;font-weight:normal;color:#242424;transform:scaleX(1.0218);transform-origin:0 0;">in Millions</div>
<div class="t" style="left:89.40px;top:628.14px;font-size:25px;font-weight:normal;color:#242424;-webkit-text-stroke:0.7px #242424;">All</div>
<div class="t" style="left:89.40px;top:691.04px;font-size:25px;font-weight:normal;color:#242424;transform:scaleX(1.0174);transform-origin:0 0;-webkit-text-stroke:0.7px #242424;">AquaSplash</div>
<div class="t" style="left:109.70px;top:745.54px;font-size:25px;font-weight:normal;color:#242424;transform:scaleX(1.0324);transform-origin:0 0;-webkit-text-stroke:0.7px #242424;">Hard Seltzer</div>
<div class="t" style="left:119.90px;top:796.24px;font-size:25px;font-weight:normal;color:#242424;transform:scaleX(0.9877);transform-origin:0 0;">Berry Fusion</div>
<div class="t" style="left:119.30px;top:848.44px;font-size:25px;font-weight:normal;color:#242424;">Citrus Burst</div>
<div class="t" style="left:119.30px;top:900.04px;font-size:25px;font-weight:normal;color:#242424;transform:scaleX(1.0319);transform-origin:0 0;">Original</div>
<div class="t" style="left:89.40px;top:956.54px;font-size:25px;font-weight:normal;color:#242424;-webkit-text-stroke:0.7px #242424;">Artisan Ale</div>
<div class="t" style="left:119.30px;top:1269.14px;font-size:25px;font-weight:normal;color:#242424;transform:scaleX(1.0070);transform-origin:0 0;">Premium</div>
<div class="t" style="left:364.75px;top:629.24px;font-size:25px;font-weight:normal;color:#1f1f1f;-webkit-text-stroke:0.7px #1f1f1f;">17,892.72</div>
<div class="t" style="left:538.75px;top:629.24px;font-size:25px;font-weight:normal;color:#1f1f1f;-webkit-text-stroke:0.7px #1f1f1f;">1,284.50</div>
<div class="t" style="left:735.25px;top:629.24px;font-size:25px;font-weight:normal;color:#1f1f1f;-webkit-text-stroke:0.7px #1f1f1f;">40.11</div>
<div class="t" style="left:844.75px;top:629.24px;font-size:25px;font-weight:normal;color:#1f1f1f;-webkit-text-stroke:0.7px #1f1f1f;">17,852.61</div>
<div class="t" style="left:1004.75px;top:629.24px;font-size:25px;font-weight:normal;color:#1f1f1f;-webkit-text-stroke:0.7px #1f1f1f;">17,931.64</div>
<div class="t" style="left:1178.75px;top:629.24px;font-size:25px;font-weight:normal;color:#1f1f1f;-webkit-text-stroke:0.7px #1f1f1f;">1,285.39</div>
<div class="t" style="left:1373.50px;top:629.24px;font-size:25px;font-weight:normal;color:#1f1f1f;-webkit-text-stroke:0.7px #1f1f1f;">40.14</div>
<div class="t" style="left:1484.75px;top:629.24px;font-size:25px;font-weight:normal;color:#1f1f1f;-webkit-text-stroke:0.7px #1f1f1f;">17,891.50</div>
<div class="t" style="left:1644.75px;top:629.24px;font-size:25px;font-weight:normal;color:#1f1f1f;-webkit-text-stroke:0.7px #1f1f1f;">17,843.17</div>
<div class="t" style="left:1818.75px;top:629.24px;font-size:25px;font-weight:normal;color:#1f1f1f;-webkit-text-stroke:0.7px #1f1f1f;">1,278.29</div>
<div class="t" style="left:2013.50px;top:629.24px;font-size:25px;font-weight:normal;color:#1f1f1f;-webkit-text-stroke:0.7px #1f1f1f;">40.04</div>
<div class="t" style="left:2124.75px;top:629.24px;font-size:25px;font-weight:normal;color:#1f1f1f;-webkit-text-stroke:0.7px #1f1f1f;">17,803.13</div>
<div class="t" style="left:399.50px;top:692.44px;font-size:25px;font-weight:normal;color:#1f1f1f;-webkit-text-stroke:0.7px #1f1f1f;">310.60</div>
<div class="t" style="left:573.50px;top:692.44px;font-size:25px;font-weight:normal;color:#1f1f1f;-webkit-text-stroke:0.7px #1f1f1f;">19.64</div>
<div class="t" style="left:747.25px;top:692.44px;font-size:25px;font-weight:normal;color:#1f1f1f;-webkit-text-stroke:0.7px #1f1f1f;">0.63</div>
<div class="t" style="left:879.50px;top:692.44px;font-size:25px;font-weight:normal;color:#1f1f1f;-webkit-text-stroke:0.7px #1f1f1f;">309.97</div>
<div class="t" style="left:1039.50px;top:692.44px;font-size:25px;font-weight:normal;color:#1f1f1f;-webkit-text-stroke:0.7px #1f1f1f;">301.65</div>
<div class="t" style="left:1213.50px;top:692.44px;font-size:25px;font-weight:normal;color:#1f1f1f;-webkit-text-stroke:0.7px #1f1f1f;">18.83</div>
<div class="t" style="left:1387.25px;top:692.44px;font-size:25px;font-weight:normal;color:#1f1f1f;-webkit-text-stroke:0.7px #1f1f1f;">0.61</div>
<div class="t" style="left:1519.50px;top:692.44px;font-size:25px;font-weight:normal;color:#1f1f1f;-webkit-text-stroke:0.7px #1f1f1f;">301.04</div>
<div class="t" style="left:1679.50px;top:692.44px;font-size:25px;font-weight:normal;color:#1f1f1f;-webkit-text-stroke:0.7px #1f1f1f;">290.00</div>
<div class="t" style="left:1853.50px;top:692.44px;font-size:25px;font-weight:normal;color:#1f1f1f;-webkit-text-stroke:0.7px #1f1f1f;">18.10</div>
<div class="t" style="left:2027.25px;top:692.44px;font-size:25px;font-weight:normal;color:#1f1f1f;-webkit-text-stroke:0.7px #1f1f1f;">0.60</div>
<div class="t" style="left:2159.50px;top:692.44px;font-size:25px;font-weight:normal;color:#1f1f1f;-webkit-text-stroke:0.7px #1f1f1f;">289.40</div>
<div class="t" style="left:399.50px;top:746.24px;font-size:25px;font-weight:normal;color:#1f1f1f;-webkit-text-stroke:0.7px #1f1f1f;">310.60</div>
<div class="t" style="left:573.50px;top:746.24px;font-size:25px;font-weight:normal;color:#1f1f1f;-webkit-text-stroke:0.7px #1f1f1f;">19.64</div>
<div class="t" style="left:747.25px;top:746.24px;font-size:25px;font-weight:normal;color:#1f1f1f;-webkit-text-stroke:0.7px #1f1f1f;">0.63</div>
<div class="t" style="left:879.50px;top:746.24px;font-size:25px;font-weight:normal;color:#1f1f1f;-webkit-text-stroke:0.7px #1f1f1f;">309.97</div>
<div class="t" style="left:1039.50px;top:746.24px;font-size:25px;font-weight:normal;color:#1f1f1f;-webkit-text-stroke:0.7px #1f1f1f;">301.65</div>
<div class="t" style="left:1213.50px;top:746.24px;font-size:25px;font-weight:normal;color:#1f1f1f;-webkit-text-stroke:0.7px #1f1f1f;">18.83</div>
<div class="t" style="left:1387.25px;top:746.24px;font-size:25px;font-weight:normal;color:#1f1f1f;-webkit-text-stroke:0.7px #1f1f1f;">0.61</div>
<div class="t" style="left:1519.50px;top:746.24px;font-size:25px;font-weight:normal;color:#1f1f1f;-webkit-text-stroke:0.7px #1f1f1f;">301.04</div>
<div class="t" style="left:1679.50px;top:746.24px;font-size:25px;font-weight:normal;color:#1f1f1f;-webkit-text-stroke:0.7px #1f1f1f;">290.00</div>
<div class="t" style="left:1853.50px;top:746.24px;font-size:25px;font-weight:normal;color:#1f1f1f;-webkit-text-stroke:0.7px #1f1f1f;">18.10</div>
<div class="t" style="left:2027.25px;top:746.24px;font-size:25px;font-weight:normal;color:#1f1f1f;-webkit-text-stroke:0.7px #1f1f1f;">0.60</div>
<div class="t" style="left:2159.50px;top:746.24px;font-size:25px;font-weight:normal;color:#1f1f1f;-webkit-text-stroke:0.7px #1f1f1f;">289.40</div>
<div class="t" style="left:413.50px;top:797.84px;font-size:25px;font-weight:normal;color:#1f1f1f;">48.24</div>
<div class="t" style="left:587.25px;top:797.84px;font-size:25px;font-weight:normal;color:#1f1f1f;">3.04</div>
<div class="t" style="left:747.25px;top:797.84px;font-size:25px;font-weight:normal;color:#1f1f1f;">0.09</div>
<div class="t" style="left:893.50px;top:797.84px;font-size:25px;font-weight:normal;color:#1f1f1f;">48.15</div>
<div class="t" style="left:1053.50px;top:797.84px;font-size:25px;font-weight:normal;color:#1f1f1f;">46.12</div>
<div class="t" style="left:1227.25px;top:797.84px;font-size:25px;font-weight:normal;color:#1f1f1f;">2.96</div>
<div class="t" style="left:1387.25px;top:797.84px;font-size:25px;font-weight:normal;color:#1f1f1f;">0.09</div>
<div class="t" style="left:1533.50px;top:797.84px;font-size:25px;font-weight:normal;color:#1f1f1f;">46.03</div>
<div class="t" style="left:1693.50px;top:797.84px;font-size:25px;font-weight:normal;color:#1f1f1f;">43.83</div>
<div class="t" style="left:1867.25px;top:797.84px;font-size:25px;font-weight:normal;color:#1f1f1f;">2.78</div>
<div class="t" style="left:2027.25px;top:797.84px;font-size:25px;font-weight:normal;color:#1f1f1f;">0.09</div>
<div class="t" style="left:2173.50px;top:797.84px;font-size:25px;font-weight:normal;color:#1f1f1f;">43.74</div>
<div class="t" style="left:413.50px;top:849.34px;font-size:25px;font-weight:normal;color:#1f1f1f;">61.87</div>
<div class="t" style="left:587.25px;top:849.34px;font-size:25px;font-weight:normal;color:#1f1f1f;">3.93</div>
<div class="t" style="left:747.25px;top:849.34px;font-size:25px;font-weight:normal;color:#1f1f1f;">0.13</div>
<div class="t" style="left:893.50px;top:849.34px;font-size:25px;font-weight:normal;color:#1f1f1f;">61.74</div>
<div class="t" style="left:1053.50px;top:849.34px;font-size:25px;font-weight:normal;color:#1f1f1f;">62.23</div>
<div class="t" style="left:1227.25px;top:849.34px;font-size:25px;font-weight:normal;color:#1f1f1f;">3.89</div>
<div class="t" style="left:1387.25px;top:849.34px;font-size:25px;font-weight:normal;color:#1f1f1f;">0.12</div>
<div class="t" style="left:1535.25px;top:849.34px;font-size:25px;font-weight:normal;color:#1f1f1f;">62.11</div>
<div class="t" style="left:1693.50px;top:849.34px;font-size:25px;font-weight:normal;color:#1f1f1f;">57.10</div>
<div class="t" style="left:1867.25px;top:849.34px;font-size:25px;font-weight:normal;color:#1f1f1f;">3.62</div>
<div class="t" style="left:2027.25px;top:849.34px;font-size:25px;font-weight:normal;color:#1f1f1f;">0.12</div>
<div class="t" style="left:2173.50px;top:849.34px;font-size:25px;font-weight:normal;color:#1f1f1f;">56.98</div>
<div class="t" style="left:399.50px;top:900.84px;font-size:25px;font-weight:normal;color:#1f1f1f;">200.49</div>
<div class="t" style="left:573.50px;top:900.84px;font-size:25px;font-weight:normal;color:#1f1f1f;">12.67</div>
<div class="t" style="left:747.25px;top:900.84px;font-size:25px;font-weight:normal;color:#1f1f1f;">0.41</div>
<div class="t" style="left:879.50px;top:900.84px;font-size:25px;font-weight:normal;color:#1f1f1f;">200.08</div>
<div class="t" style="left:1039.50px;top:900.84px;font-size:25px;font-weight:normal;color:#1f1f1f;">193.30</div>
<div class="t" style="left:1215.25px;top:900.84px;font-size:25px;font-weight:normal;color:#1f1f1f;">11.99</div>
<div class="t" style="left:1387.25px;top:900.84px;font-size:25px;font-weight:normal;color:#1f1f1f;">0.40</div>
<div class="t" style="left:1519.50px;top:900.84px;font-size:25px;font-weight:normal;color:#1f1f1f;">192.90</div>
<div class="t" style="left:1679.50px;top:900.84px;font-size:25px;font-weight:normal;color:#1f1f1f;">189.07</div>
<div class="t" style="left:1855.25px;top:900.84px;font-size:25px;font-weight:normal;color:#1f1f1f;">11.71</div>
<div class="t" style="left:2027.25px;top:900.84px;font-size:25px;font-weight:normal;color:#1f1f1f;">0.39</div>
<div class="t" style="left:2159.50px;top:900.84px;font-size:25px;font-weight:normal;color:#1f1f1f;">188.68</div>
<div class="t" style="left:378.75px;top:956.54px;font-size:25px;font-weight:normal;color:#1f1f1f;-webkit-text-stroke:0.7px #1f1f1f;">1,486.06</div>
<div class="t" style="left:559.50px;top:956.54px;font-size:25px;font-weight:normal;color:#1f1f1f;-webkit-text-stroke:0.7px #1f1f1f;">104.48</div>
<div class="t" style="left:747.25px;top:956.54px;font-size:25px;font-weight:normal;color:#1f1f1f;-webkit-text-stroke:0.7px #1f1f1f;">3.35</div>
<div class="t" style="left:858.75px;top:956.54px;font-size:25px;font-weight:normal;color:#1f1f1f;-webkit-text-stroke:0.7px #1f1f1f;">1,460.53</div>
<div class="t" style="left:1018.75px;top:956.54px;font-size:25px;font-weight:normal;color:#1f1f1f;-webkit-text-stroke:0.7px #1f1f1f;">1,482.98</div>
<div class="t" style="left:1199.50px;top:956.54px;font-size:25px;font-weight:normal;color:#1f1f1f;-webkit-text-stroke:0.7px #1f1f1f;">105.93</div>
<div class="t" style="left:1387.25px;top:956.54px;font-size:25px;font-weight:normal;color:#1f1f1f;-webkit-text-stroke:0.7px #1f1f1f;">3.36</div>
<div class="t" style="left:1498.75px;top:956.54px;font-size:25px;font-weight:normal;color:#1f1f1f;-webkit-text-stroke:0.7px #1f1f1f;">1,479.62</div>
<div class="t" style="left:1658.75px;top:956.54px;font-size:25px;font-weight:normal;color:#1f1f1f;-webkit-text-stroke:0.7px #1f1f1f;">1,480.96</div>
<div class="t" style="left:1839.50px;top:956.54px;font-size:25px;font-weight:normal;color:#1f1f1f;-webkit-text-stroke:0.7px #1f1f1f;">106.56</div>
<div class="t" style="left:2027.25px;top:956.54px;font-size:25px;font-weight:normal;color:#1f1f1f;-webkit-text-stroke:0.7px #1f1f1f;">3.38</div>
<div class="t" style="left:2138.75px;top:956.54px;font-size:25px;font-weight:normal;color:#1f1f1f;-webkit-text-stroke:0.7px #1f1f1f;">1,477.58</div>
<div class="t" style="left:378.75px;top:1010.74px;font-size:25px;font-weight:normal;color:#1f1f1f;-webkit-text-stroke:0.7px #1f1f1f;">1,486.06</div>
<div class="t" style="left:559.50px;top:1010.74px;font-size:25px;font-weight:normal;color:#1f1f1f;-webkit-text-stroke:0.7px #1f1f1f;">104.48</div>
<div class="t" style="left:747.25px;top:1010.74px;font-size:25px;font-weight:normal;color:#1f1f1f;-webkit-text-stroke:0.7px #1f1f1f;">3.35</div>
<div class="t" style="left:858.75px;top:1010.74px;font-size:25px;font-weight:normal;color:#1f1f1f;-webkit-text-stroke:0.7px #1f1f1f;">1,460.53</div>
<div class="t" style="left:1018.75px;top:1010.74px;font-size:25px;font-weight:normal;color:#1f1f1f;-webkit-text-stroke:0.7px #1f1f1f;">1,482.98</div>
<div class="t" style="left:1199.50px;top:1010.74px;font-size:25px;font-weight:normal;color:#1f1f1f;-webkit-text-stroke:0.7px #1f1f1f;">105.93</div>
<div class="t" style="left:1387.25px;top:1010.74px;font-size:25px;font-weight:normal;color:#1f1f1f;-webkit-text-stroke:0.7px #1f1f1f;">3.36</div>
<div class="t" style="left:1498.75px;top:1010.74px;font-size:25px;font-weight:normal;color:#1f1f1f;-webkit-text-stroke:0.7px #1f1f1f;">1,479.62</div>
<div class="t" style="left:1658.75px;top:1010.74px;font-size:25px;font-weight:normal;color:#1f1f1f;-webkit-text-stroke:0.7px #1f1f1f;">1,480.96</div>
<div class="t" style="left:1839.50px;top:1010.74px;font-size:25px;font-weight:normal;color:#1f1f1f;-webkit-text-stroke:0.7px #1f1f1f;">106.56</div>
<div class="t" style="left:2027.25px;top:1010.74px;font-size:25px;font-weight:normal;color:#1f1f1f;-webkit-text-stroke:0.7px #1f1f1f;">3.38</div>
<div class="t" style="left:2138.75px;top:1010.74px;font-size:25px;font-weight:normal;color:#1f1f1f;-webkit-text-stroke:0.7px #1f1f1f;">1,477.58</div>
<div class="t" style="left:413.50px;top:1061.64px;font-size:25px;font-weight:normal;color:#1f1f1f;">45.14</div>
<div class="t" style="left:587.25px;top:1061.64px;font-size:25px;font-weight:normal;color:#1f1f1f;">3.26</div>
<div class="t" style="left:747.25px;top:1061.64px;font-size:25px;font-weight:normal;color:#1f1f1f;">0.10</div>
<div class="t" style="left:893.50px;top:1061.64px;font-size:25px;font-weight:normal;color:#1f1f1f;">45.14</div>
<div class="t" style="left:1053.50px;top:1061.64px;font-size:25px;font-weight:normal;color:#1f1f1f;">41.13</div>
<div class="t" style="left:1227.25px;top:1061.64px;font-size:25px;font-weight:normal;color:#1f1f1f;">2.98</div>
<div class="t" style="left:1387.25px;top:1061.64px;font-size:25px;font-weight:normal;color:#1f1f1f;">0.09</div>
<div class="t" style="left:1533.50px;top:1061.64px;font-size:25px;font-weight:normal;color:#1f1f1f;">41.04</div>
<div class="t" style="left:1693.50px;top:1061.64px;font-size:25px;font-weight:normal;color:#1f1f1f;">37.85</div>
<div class="t" style="left:1867.25px;top:1061.64px;font-size:25px;font-weight:normal;color:#1f1f1f;">2.76</div>
<div class="t" style="left:2027.25px;top:1061.64px;font-size:25px;font-weight:normal;color:#1f1f1f;">0.09</div>
<div class="t" style="left:2173.50px;top:1061.64px;font-size:25px;font-weight:normal;color:#1f1f1f;">37.76</div>
<div class="t" style="left:399.50px;top:1113.24px;font-size:25px;font-weight:normal;color:#1f1f1f;">106.75</div>
<div class="t" style="left:587.25px;top:1113.24px;font-size:25px;font-weight:normal;color:#1f1f1f;">7.73</div>
<div class="t" style="left:747.25px;top:1113.24px;font-size:25px;font-weight:normal;color:#1f1f1f;">0.24</div>
<div class="t" style="left:879.50px;top:1113.24px;font-size:25px;font-weight:normal;color:#1f1f1f;">106.75</div>
<div class="t" style="left:1039.50px;top:1113.24px;font-size:25px;font-weight:normal;color:#1f1f1f;">109.31</div>
<div class="t" style="left:1227.25px;top:1113.24px;font-size:25px;font-weight:normal;color:#1f1f1f;">8.02</div>
<div class="t" style="left:1387.25px;top:1113.24px;font-size:25px;font-weight:normal;color:#1f1f1f;">0.25</div>
<div class="t" style="left:1519.50px;top:1113.24px;font-size:25px;font-weight:normal;color:#1f1f1f;">109.07</div>
<div class="t" style="left:1679.50px;top:1113.24px;font-size:25px;font-weight:normal;color:#1f1f1f;">105.99</div>
<div class="t" style="left:1867.25px;top:1113.24px;font-size:25px;font-weight:normal;color:#1f1f1f;">7.52</div>
<div class="t" style="left:2027.25px;top:1113.24px;font-size:25px;font-weight:normal;color:#1f1f1f;">0.24</div>
<div class="t" style="left:2159.50px;top:1113.24px;font-size:25px;font-weight:normal;color:#1f1f1f;">105.74</div>
<div class="t" style="left:413.50px;top:1165.14px;font-size:25px;font-weight:normal;color:#1f1f1f;">14.78</div>
<div class="t" style="left:587.25px;top:1165.14px;font-size:25px;font-weight:normal;color:#1f1f1f;">1.02</div>
<div class="t" style="left:747.25px;top:1165.14px;font-size:25px;font-weight:normal;color:#1f1f1f;">0.03</div>
<div class="t" style="left:893.50px;top:1165.14px;font-size:25px;font-weight:normal;color:#1f1f1f;">14.78</div>
<div class="t" style="left:1053.50px;top:1165.14px;font-size:25px;font-weight:normal;color:#1f1f1f;">16.31</div>
<div class="t" style="left:1227.25px;top:1165.14px;font-size:25px;font-weight:normal;color:#1f1f1f;">1.13</div>
<div class="t" style="left:1387.25px;top:1165.14px;font-size:25px;font-weight:normal;color:#1f1f1f;">0.04</div>
<div class="t" style="left:1533.50px;top:1165.14px;font-size:25px;font-weight:normal;color:#1f1f1f;">16.28</div>
<div class="t" style="left:1693.50px;top:1165.14px;font-size:25px;font-weight:normal;color:#1f1f1f;">15.92</div>
<div class="t" style="left:1867.25px;top:1165.14px;font-size:25px;font-weight:normal;color:#1f1f1f;">1.14</div>
<div class="t" style="left:2027.25px;top:1165.14px;font-size:25px;font-weight:normal;color:#1f1f1f;">0.03</div>
<div class="t" style="left:2173.50px;top:1165.14px;font-size:25px;font-weight:normal;color:#1f1f1f;">15.89</div>
<div class="t" style="left:378.75px;top:1216.84px;font-size:25px;font-weight:normal;color:#1f1f1f;">1,156.09</div>
<div class="t" style="left:573.50px;top:1216.84px;font-size:25px;font-weight:normal;color:#1f1f1f;">82.57</div>
<div class="t" style="left:747.25px;top:1216.84px;font-size:25px;font-weight:normal;color:#1f1f1f;">2.65</div>
<div class="t" style="left:858.75px;top:1216.84px;font-size:25px;font-weight:normal;color:#1f1f1f;">1,156.09</div>
<div class="t" style="left:1018.75px;top:1216.84px;font-size:25px;font-weight:normal;color:#1f1f1f;">1,179.31</div>
<div class="t" style="left:1213.50px;top:1216.84px;font-size:25px;font-weight:normal;color:#1f1f1f;">83.95</div>
<div class="t" style="left:1387.25px;top:1216.84px;font-size:25px;font-weight:normal;color:#1f1f1f;">2.66</div>
<div class="t" style="left:1498.75px;top:1216.84px;font-size:25px;font-weight:normal;color:#1f1f1f;">1,176.65</div>
<div class="t" style="left:1658.75px;top:1216.84px;font-size:25px;font-weight:normal;color:#1f1f1f;">1,171.33</div>
<div class="t" style="left:1853.50px;top:1216.84px;font-size:25px;font-weight:normal;color:#1f1f1f;">84.38</div>
<div class="t" style="left:2027.25px;top:1216.84px;font-size:25px;font-weight:normal;color:#1f1f1f;">2.67</div>
<div class="t" style="left:2138.75px;top:1216.84px;font-size:25px;font-weight:normal;color:#1f1f1f;">1,168.66</div>
<div class="t" style="left:413.50px;top:1269.14px;font-size:25px;font-weight:normal;color:#1f1f1f;">77.24</div>
<div class="t" style="left:587.25px;top:1269.14px;font-size:25px;font-weight:normal;color:#1f1f1f;">5.54</div>
<div class="t" style="left:747.25px;top:1269.14px;font-size:25px;font-weight:normal;color:#1f1f1f;">0.18</div>
<div class="t" style="left:893.50px;top:1269.14px;font-size:25px;font-weight:normal;color:#1f1f1f;">77.24</div>
<div class="t" style="left:1053.50px;top:1269.14px;font-size:25px;font-weight:normal;color:#1f1f1f;">74.06</div>
<div class="t" style="left:1227.25px;top:1269.14px;font-size:25px;font-weight:normal;color:#1f1f1f;">5.31</div>
<div class="t" style="left:1387.25px;top:1269.14px;font-size:25px;font-weight:normal;color:#1f1f1f;">0.17</div>
<div class="t" style="left:1533.50px;top:1269.14px;font-size:25px;font-weight:normal;color:#1f1f1f;">73.89</div>
<div class="t" style="left:1693.50px;top:1269.14px;font-size:25px;font-weight:normal;color:#1f1f1f;">78.73</div>
<div class="t" style="left:1867.25px;top:1269.14px;font-size:25px;font-weight:normal;color:#1f1f1f;">5.65</div>
<div class="t" style="left:2027.25px;top:1269.14px;font-size:25px;font-weight:normal;color:#1f1f1f;">0.18</div>
<div class="t" style="left:2173.50px;top:1269.14px;font-size:25px;font-weight:normal;color:#1f1f1f;">78.55</div>
<div class="t" style="left:151.40px;top:295.88px;font-size:22px;font-weight:normal;color:#242424;">=</div>
<div class="t" style="left:37.80px;top:1352.73px;font-size:23px;font-weight:normal;color:#424242;transform:scaleX(0.9582);transform-origin:0 0;">Rows: 122</div>
<div class="t" style="left:163.40px;top:1352.73px;font-size:23px;font-weight:normal;color:#424242;transform:scaleX(0.9950);transform-origin:0 0;">Columns: 28</div>
<div class="t" style="left:318.30px;top:1352.73px;font-size:23px;font-weight:normal;color:#424242;transform:scaleX(0.9724);transform-origin:0 0;">Sum: 9.17b</div>
<div class="t" style="left:458.00px;top:1352.73px;font-size:23px;font-weight:normal;color:#424242;">Avg: 764.38m</div>
<div class="t" style="left:624.50px;top:1352.73px;font-size:23px;font-weight:normal;color:#424242;">Count: 12</div>
<div class="b" style="left:1827.6px;top:1344.2px;width:110.4px;height:37.8px;background:#fff;border:1.5px solid #cfcfcf;border-bottom:2px solid #4a4a4a;border-radius:6px"></div>
<div class="t" style="left:1854.00px;top:1353.93px;font-size:23px;font-weight:normal;color:#242424;transform:scaleX(0.9351);transform-origin:0 0;">100</div>
<div class="t" style="left:1895.00px;top:1353.93px;font-size:23px;font-weight:normal;color:#242424;transform:scaleX(0.8976);transform-origin:0 0;">%</div>
<div class="t" style="left:2029.90px;top:1352.03px;font-size:23px;font-weight:normal;color:#424242;transform:scaleX(0.9247);transform-origin:0 0;">Page</div>
<div class="b" style="left:2088.6px;top:1342.6px;width:49px;height:38.4px;background:#f4f4f4;border:1.5px solid #d6d6d6"></div>
<div class="t" style="left:2108.00px;top:1352.03px;font-size:23px;font-weight:normal;color:#424242;transform:scaleX(0.8000);transform-origin:0 0;">1</div>
<div class="t" style="left:2147.00px;top:1352.03px;font-size:23px;font-weight:normal;color:#424242;transform:scaleX(1.0222);transform-origin:0 0;">of 9</div>
<div class="t" style="left:2327.00px;top:1352.03px;font-size:23px;font-weight:normal;color:#424242;transform:scaleX(0.9020);transform-origin:0 0;">1</div>
<div class="t" style="left:2350.20px;top:1352.03px;font-size:23px;font-weight:normal;color:#424242;transform:scaleX(1.0130);transform-origin:0 0;">to</div>
<div class="t" style="left:2382.70px;top:1352.03px;font-size:23px;font-weight:normal;color:#424242;transform:scaleX(0.8824);transform-origin:0 0;">15</div>
<div class="t" style="left:2417.50px;top:1352.03px;font-size:23px;font-weight:normal;color:#424242;transform:scaleX(1.1065);transform-origin:0 0;">of</div>
<div class="t" style="left:2449.00px;top:1352.03px;font-size:23px;font-weight:normal;color:#424242;transform:scaleX(0.9662);transform-origin:0 0;">126</div>
<div class="b" style="left:2157px;top:1393.5px;width:335.5px;height:63.3px;background:#ebebeb;border-radius:8px 0 0 8px"></div>
<div class="t" style="left:98.00px;top:1412.20px;font-size:28px;font-weight:normal;color:#242424;transform:scaleX(0.9618);transform-origin:0 0;">Planning 1</div>
<div class="t" style="left:452.00px;top:1412.20px;font-size:28px;font-weight:normal;color:#242424;transform:scaleX(0.9618);transform-origin:0 0;">Planning 2</div>
<div class="t" style="left:806.00px;top:1412.20px;font-size:28px;font-weight:normal;color:#242424;transform:scaleX(0.9618);transform-origin:0 0;">Planning 3</div>
<div class="t" style="left:1160.00px;top:1412.20px;font-size:28px;font-weight:normal;color:#242424;transform:scaleX(0.9618);transform-origin:0 0;">Planning 4</div>
<div class="t" style="left:1514.00px;top:1412.20px;font-size:28px;font-weight:normal;color:#242424;transform:scaleX(0.9618);transform-origin:0 0;">Planning 5</div>
<div class="t" style="left:1868.00px;top:1412.20px;font-size:28px;font-weight:normal;color:#242424;transform:scaleX(0.9618);transform-origin:0 0;">Planning 6</div>
<div class="t" style="left:2222.00px;top:1412.20px;font-size:28px;font-weight:normal;color:#242424;transform:scaleX(0.9618);transform-origin:0 0;">Planning 7</div>
<div class="t" style="-webkit-text-stroke:0.8px #1f1f1f;left:2617.99px;top:88.00px;font-size:32px;font-weight:normal;color:#1f1f1f;transform:rotate(90deg) scaleX(0.9598);transform-origin:0 0;">Filters</div>
<div class="t" style="-webkit-text-stroke:0.8px #1f1f1f;left:2687.09px;top:88.00px;font-size:32px;font-weight:normal;color:#1f1f1f;transform:rotate(90deg) scaleX(0.9267);transform-origin:0 0;">Fields</div>
<div class="t" style="-webkit-text-stroke:0.8px #1f1f1f;left:2756.89px;top:135.60px;font-size:32px;font-weight:normal;color:#1f1f1f;transform:rotate(90deg) scaleX(0.9343);transform-origin:0 0;">Data</div>
<svg class="b" style="left:0;top:0" width="2793" height="1496" viewBox="0 0 2793 1496" fill="none" stroke="#3b3b3b" stroke-width="2" stroke-linecap="round" stroke-linejoin="round"><path d="M36,303 L48,291 Q50,289 52,291 L61,300 Q63,302 61,304 L51,314 H43 L36,307 Q34,305 36,303 Z M42.5,296.5 L56.5,310.5 M51,314 H62" stroke="#b8b8b8" stroke-width="1.8"/><path d="M2359.5,313.5 L2380.5,292.5 M2372,292.5 H2380.5 V301 M2359.5,305 V313.5 H2368" stroke="#bdbdbd" stroke-width="1.8" stroke-linecap="butt"/><path d="M2427.5,303.5 L2434.5,311 L2450.8,294.5" stroke="#bdbdbd" stroke-width="1.6"/><path d="M2482,294.3 L2500,311.8 M2500,294.3 L2482,311.8" stroke="#bdbdbd" stroke-width="1.6"/><path d="M2522,286 L2556,319.5" stroke="#3b3b3b" stroke-width="2.4"/><path d="M2524,317.5 L2532,309.5 M2526.5,303.5 L2534,300.5 L2547,313.5 L2544,321 Z M2537,289 L2541,285 Q2543,283.5 2545,285 L2553,293 Q2554.5,295 2553,297 L2549.5,301" stroke="#3b3b3b" stroke-width="2.2"/><rect x="60.5" y="630.5" width="15.5" height="15.5" stroke="#555" stroke-width="1.5" stroke-linecap="butt"/><line x1="64.5" y1="638.25" x2="72.0" y2="638.25" stroke="#555" stroke-width="1.5" stroke-linecap="butt"/><rect x="60.5" y="693.5" width="15.5" height="15.5" stroke="#555" stroke-width="1.5" stroke-linecap="butt"/><line x1="64.5" y1="701.25" x2="72.0" y2="701.25" stroke="#555" stroke-width="1.5" stroke-linecap="butt"/><rect x="80.5" y="748" width="15.5" height="15.5" stroke="#555" stroke-width="1.5" stroke-linecap="butt"/><line x1="84.5" y1="755.75" x2="92.0" y2="755.75" stroke="#555" stroke-width="1.5" stroke-linecap="butt"/><rect x="60.5" y="958.5" width="15.5" height="15.5" stroke="#555" stroke-width="1.5" stroke-linecap="butt"/><line x1="64.5" y1="966.25" x2="72.0" y2="966.25" stroke="#555" stroke-width="1.5" stroke-linecap="butt"/><path d="M62,536 V528 H90 V556 H82" stroke="#3b3b3b" stroke-width="1.8" stroke-linecap="butt"/><rect x="56" y="537" width="25.5" height="25.5" stroke="#3b3b3b" stroke-width="1.8"/><path d="M62,550 L68,555.7 L75,543" stroke="#1e50a0" stroke-width="1.6"/><path d="M22,954.6 H39.9 M22,959.8 H39.9 M22,965 H39.9 M22,970.2 H39.9" stroke="#555" stroke-width="1.3" stroke-linecap="butt"/><rect x="2553" y="604" width="14" height="700" rx="7" fill="#fafafa" stroke="#ececec" stroke-width="1"/><rect x="2553" y="604" width="14" height="574" rx="7" fill="#b3b3b3" stroke="none"/><path d="M750,1363.3 A11.3,9.7 0 0,1 772.6,1363.3" stroke="#424242" stroke-width="1.8"/><circle cx="761.3" cy="1363.3" r="4.3" stroke="#424242" stroke-width="1.8"/><line x1="750.9" y1="1353.1" x2="769.4" y2="1371.6" stroke="#f4f4f4" stroke-width="4.5"/><line x1="750.9" y1="1353.1" x2="769.4" y2="1371.6" stroke="#424242" stroke-width="1.8"/><line x1="815.5" y1="1340" x2="815.5" y2="1383" stroke="#e0e0e0" stroke-width="1.5"/><line x1="1504.6" y1="1365.2" x2="1523.8" y2="1365.2" stroke="#424242" stroke-width="1.6" stroke-linecap="butt"/><line x1="1557.5" y1="1366" x2="1756.4" y2="1366" stroke="#c8c8c8" stroke-width="4"/><line x1="1557.5" y1="1366" x2="1641.8" y2="1366" stroke="#2f7a68" stroke-width="4"/><circle cx="1641.8" cy="1366.1" r="16" fill="#2f7a68" stroke="#fff" stroke-width="4"/><path d="M1776.1,1366 H1797.5 M1786.8,1356 V1376.1" stroke="#424242" stroke-width="1.8" stroke-linecap="butt"/><path d="M1973.7,1355 V1373.4 M1992,1355 L1981.8,1364.2 L1992,1373.4 M2016.8,1355 L2006.2,1364.2 L2016.8,1373.4" stroke="#a8a8a8" stroke-width="3" stroke-linecap="butt" stroke-linejoin="miter"/><path d="M2199.2,1355 L2209.8,1364.2 L2199.2,1373.4 M2223.3,1355 L2234,1364.2 L2223.3,1373.4 M2241.5,1355 V1373.4" stroke="#3b3b3b" stroke-width="3" stroke-linecap="butt" stroke-linejoin="miter"/><path d="M2549.50,1362.00 L2549.50,1362.19 L2549.49,1362.38 L2549.48,1362.58 L2549.47,1362.77 L2549.46,1362.96 L2549.44,1363.15 L2549.42,1363.34 L2549.39,1363.53 L2549.36,1363.72 L2549.33,1363.91 L2549.30,1364.10 L2549.39,1364.31 L2549.71,1364.59 L2550.22,1364.92 L2550.84,1365.31 L2551.50,1365.73 L2552.10,1366.16 L2552.57,1366.57 L2552.84,1366.94 L2552.88,1367.23 L2552.78,1367.48 L2552.69,1367.73 L2552.58,1367.98 L2552.48,1368.22 L2552.37,1368.47 L2552.25,1368.71 L2552.13,1368.95 L2552.01,1369.18 L2551.88,1369.42 L2551.75,1369.65 L2551.61,1369.88 L2551.48,1370.11 L2551.33,1370.33 L2551.18,1370.56 L2551.03,1370.78 L2550.88,1370.99 L2550.72,1371.21 L2550.56,1371.42 L2550.39,1371.63 L2550.22,1371.83 L2549.95,1371.95 L2549.50,1371.90 L2548.90,1371.70 L2548.23,1371.39 L2547.53,1371.03 L2546.89,1370.69 L2546.35,1370.41 L2545.95,1370.27 L2545.72,1370.30 L2545.57,1370.43 L2545.42,1370.55 L2545.27,1370.67 L2545.12,1370.78 L2544.97,1370.90 L2544.81,1371.01 L2544.65,1371.12 L2544.49,1371.23 L2544.33,1371.33 L2544.17,1371.43 L2544.00,1371.53 L2543.83,1371.62 L2543.66,1371.71 L2543.49,1371.80 L2543.32,1371.89 L2543.15,1371.97 L2542.97,1372.05 L2542.80,1372.13 L2542.62,1372.20 L2542.44,1372.27 L2542.26,1372.34 L2542.08,1372.40 L2541.94,1372.58 L2541.86,1373.00 L2541.83,1373.61 L2541.81,1374.34 L2541.77,1375.12 L2541.70,1375.86 L2541.58,1376.47 L2541.39,1376.89 L2541.16,1377.07 L2540.89,1377.11 L2540.63,1377.15 L2540.36,1377.19 L2540.10,1377.22 L2539.83,1377.24 L2539.57,1377.26 L2539.30,1377.28 L2539.03,1377.29 L2538.77,1377.30 L2538.50,1377.30 L2538.23,1377.30 L2537.97,1377.29 L2537.70,1377.28 L2537.43,1377.26 L2537.17,1377.24 L2536.90,1377.22 L2536.64,1377.19 L2536.37,1377.15 L2536.11,1377.11 L2535.84,1377.07 L2535.61,1376.89 L2535.42,1376.47 L2535.30,1375.86 L2535.23,1375.12 L2535.19,1374.34 L2535.17,1373.61 L2535.14,1373.00 L2535.06,1372.58 L2534.92,1372.40 L2534.74,1372.34 L2534.56,1372.27 L2534.38,1372.20 L2534.20,1372.13 L2534.03,1372.05 L2533.85,1371.97 L2533.68,1371.89 L2533.51,1371.80 L2533.34,1371.71 L2533.17,1371.62 L2533.00,1371.53 L2532.83,1371.43 L2532.67,1371.33 L2532.51,1371.23 L2532.35,1371.12 L2532.19,1371.01 L2532.03,1370.90 L2531.88,1370.78 L2531.73,1370.67 L2531.58,1370.55 L2531.43,1370.43 L2531.28,1370.30 L2531.05,1370.27 L2530.65,1370.41 L2530.11,1370.69 L2529.47,1371.03 L2528.77,1371.39 L2528.10,1371.70 L2527.50,1371.90 L2527.05,1371.95 L2526.78,1371.83 L2526.61,1371.63 L2526.44,1371.42 L2526.28,1371.21 L2526.12,1370.99 L2525.97,1370.78 L2525.82,1370.56 L2525.67,1370.33 L2525.52,1370.11 L2525.39,1369.88 L2525.25,1369.65 L2525.12,1369.42 L2524.99,1369.18 L2524.87,1368.95 L2524.75,1368.71 L2524.63,1368.47 L2524.52,1368.22 L2524.42,1367.98 L2524.31,1367.73 L2524.22,1367.48 L2524.12,1367.23 L2524.16,1366.94 L2524.43,1366.57 L2524.90,1366.16 L2525.50,1365.73 L2526.16,1365.31 L2526.78,1364.92 L2527.29,1364.59 L2527.61,1364.31 L2527.70,1364.10 L2527.67,1363.91 L2527.64,1363.72 L2527.61,1363.53 L2527.58,1363.34 L2527.56,1363.15 L2527.54,1362.96 L2527.53,1362.77 L2527.52,1362.58 L2527.51,1362.38 L2527.50,1362.19 L2527.50,1362.00 L2527.50,1361.81 L2527.51,1361.62 L2527.52,1361.42 L2527.53,1361.23 L2527.54,1361.04 L2527.56,1360.85 L2527.58,1360.66 L2527.61,1360.47 L2527.64,1360.28 L2527.67,1360.09 L2527.70,1359.90 L2527.61,1359.69 L2527.29,1359.41 L2526.78,1359.08 L2526.16,1358.69 L2525.50,1358.27 L2524.90,1357.84 L2524.43,1357.43 L2524.16,1357.06 L2524.12,1356.77 L2524.22,1356.52 L2524.31,1356.27 L2524.42,1356.02 L2524.52,1355.78 L2524.63,1355.53 L2524.75,1355.29 L2524.87,1355.05 L2524.99,1354.82 L2525.12,1354.58 L2525.25,1354.35 L2525.39,1354.12 L2525.52,1353.89 L2525.67,1353.67 L2525.82,1353.44 L2525.97,1353.22 L2526.12,1353.01 L2526.28,1352.79 L2526.44,1352.58 L2526.61,1352.37 L2526.78,1352.17 L2527.05,1352.05 L2527.50,1352.10 L2528.10,1352.30 L2528.77,1352.61 L2529.47,1352.97 L2530.11,1353.31 L2530.65,1353.59 L2531.05,1353.73 L2531.28,1353.70 L2531.43,1353.57 L2531.58,1353.45 L2531.73,1353.33 L2531.88,1353.22 L2532.03,1353.10 L2532.19,1352.99 L2532.35,1352.88 L2532.51,1352.77 L2532.67,1352.67 L2532.83,1352.57 L2533.00,1352.47 L2533.17,1352.38 L2533.34,1352.29 L2533.51,1352.20 L2533.68,1352.11 L2533.85,1352.03 L2534.03,1351.95 L2534.20,1351.87 L2534.38,1351.80 L2534.56,1351.73 L2534.74,1351.66 L2534.92,1351.60 L2535.06,1351.42 L2535.14,1351.00 L2535.17,1350.39 L2535.19,1349.66 L2535.23,1348.88 L2535.30,1348.14 L2535.42,1347.53 L2535.61,1347.11 L2535.84,1346.93 L2536.11,1346.89 L2536.37,1346.85 L2536.64,1346.81 L2536.90,1346.78 L2537.17,1346.76 L2537.43,1346.74 L2537.70,1346.72 L2537.97,1346.71 L2538.23,1346.70 L2538.50,1346.70 L2538.77,1346.70 L2539.03,1346.71 L2539.30,1346.72 L2539.57,1346.74 L2539.83,1346.76 L2540.10,1346.78 L2540.36,1346.81 L2540.63,1346.85 L2540.89,1346.89 L2541.16,1346.93 L2541.39,1347.11 L2541.58,1347.53 L2541.70,1348.14 L2541.77,1348.88 L2541.81,1349.66 L2541.83,1350.39 L2541.86,1351.00 L2541.94,1351.42 L2542.08,1351.60 L2542.26,1351.66 L2542.44,1351.73 L2542.62,1351.80 L2542.80,1351.87 L2542.97,1351.95 L2543.15,1352.03 L2543.32,1352.11 L2543.49,1352.20 L2543.66,1352.29 L2543.83,1352.38 L2544.00,1352.47 L2544.17,1352.57 L2544.33,1352.67 L2544.49,1352.77 L2544.65,1352.88 L2544.81,1352.99 L2544.97,1353.10 L2545.12,1353.22 L2545.27,1353.33 L2545.42,1353.45 L2545.57,1353.57 L2545.72,1353.70 L2545.95,1353.73 L2546.35,1353.59 L2546.89,1353.31 L2547.53,1352.97 L2548.23,1352.61 L2548.90,1352.30 L2549.50,1352.10 L2549.95,1352.05 L2550.22,1352.17 L2550.39,1352.37 L2550.56,1352.58 L2550.72,1352.79 L2550.88,1353.01 L2551.03,1353.22 L2551.18,1353.44 L2551.33,1353.67 L2551.48,1353.89 L2551.61,1354.12 L2551.75,1354.35 L2551.88,1354.58 L2552.01,1354.82 L2552.13,1355.05 L2552.25,1355.29 L2552.37,1355.53 L2552.48,1355.78 L2552.58,1356.02 L2552.69,1356.27 L2552.78,1356.52 L2552.88,1356.77 L2552.84,1357.06 L2552.57,1357.43 L2552.10,1357.84 L2551.50,1358.27 L2550.84,1358.69 L2550.22,1359.08 L2549.71,1359.41 L2549.39,1359.69 L2549.30,1359.90 L2549.33,1360.09 L2549.36,1360.28 L2549.39,1360.47 L2549.42,1360.66 L2549.44,1360.85 L2549.46,1361.04 L2549.47,1361.23 L2549.48,1361.42 L2549.49,1361.62 L2549.50,1361.81Z" stroke="#3b3b3b" stroke-width="2"/><circle cx="2538.5" cy="1362" r="4.3" stroke="#117865" stroke-width="2"/><line x1="386" y1="1404.5" x2="386" y2="1444" stroke="#d6d6d6" stroke-width="1.5"/><line x1="740" y1="1404.5" x2="740" y2="1444" stroke="#d6d6d6" stroke-width="1.5"/><line x1="1093.5" y1="1404.5" x2="1093.5" y2="1444" stroke="#d6d6d6" stroke-width="1.5"/><line x1="1447.6" y1="1404.5" x2="1447.6" y2="1444" stroke="#d6d6d6" stroke-width="1.5"/><line x1="1801.3" y1="1404.5" x2="1801.3" y2="1444" stroke="#d6d6d6" stroke-width="1.5"/><path d="M73.2,1418.5 A13,13 0 1,0 76.2,1424" stroke="#3b3b3b" stroke-width="3.6" stroke-linecap="butt"/><path d="M68.2,1421.5 A6.5,6.5 0 1,0 70.0,1425.5" stroke="#3b3b3b" stroke-width="3.2" stroke-linecap="butt"/><circle cx="63.7" cy="1427" r="2.2" fill="#3b3b3b" stroke="none"/><line x1="63.7" y1="1427" x2="76.7" y2="1414" stroke="#3b3b3b" stroke-width="2.4"/><path d="M74.2,1410.5 L80.7,1410.5 L80.2,1417 L77.2,1414 Z" fill="#3b3b3b" stroke="#3b3b3b" stroke-width="1"/><path d="M427.2,1418.5 A13,13 0 1,0 430.2,1424" stroke="#3b3b3b" stroke-width="3.6" stroke-linecap="butt"/><path d="M422.2,1421.5 A6.5,6.5 0 1,0 424.0,1425.5" stroke="#3b3b3b" stroke-width="3.2" stroke-linecap="butt"/><circle cx="417.7" cy="1427" r="2.2" fill="#3b3b3b" stroke="none"/><line x1="417.7" y1="1427" x2="430.7" y2="1414" stroke="#3b3b3b" stroke-width="2.4"/><path d="M428.2,1410.5 L434.7,1410.5 L434.2,1417 L431.2,1414 Z" fill="#3b3b3b" stroke="#3b3b3b" stroke-width="1"/><path d="M781.2,1418.5 A13,13 0 1,0 784.2,1424" stroke="#3b3b3b" stroke-width="3.6" stroke-linecap="butt"/><path d="M776.2,1421.5 A6.5,6.5 0 1,0 778.0,1425.5" stroke="#3b3b3b" stroke-width="3.2" stroke-linecap="butt"/><circle cx="771.7" cy="1427" r="2.2" fill="#3b3b3b" stroke="none"/><line x1="771.7" y1="1427" x2="784.7" y2="1414" stroke="#3b3b3b" stroke-width="2.4"/><path d="M782.2,1410.5 L788.7,1410.5 L788.2,1417 L785.2,1414 Z" fill="#3b3b3b" stroke="#3b3b3b" stroke-width="1"/><path d="M1135.2,1418.5 A13,13 0 1,0 1138.2,1424" stroke="#3b3b3b" stroke-width="3.6" stroke-linecap="butt"/><path d="M1130.2,1421.5 A6.5,6.5 0 1,0 1132.0,1425.5" stroke="#3b3b3b" stroke-width="3.2" stroke-linecap="butt"/><circle cx="1125.7" cy="1427" r="2.2" fill="#3b3b3b" stroke="none"/><line x1="1125.7" y1="1427" x2="1138.7" y2="1414" stroke="#3b3b3b" stroke-width="2.4"/><path d="M1136.2,1410.5 L1142.7,1410.5 L1142.2,1417 L1139.2,1414 Z" fill="#3b3b3b" stroke="#3b3b3b" stroke-width="1"/><path d="M1489.2,1418.5 A13,13 0 1,0 1492.2,1424" stroke="#3b3b3b" stroke-width="3.6" stroke-linecap="butt"/><path d="M1484.2,1421.5 A6.5,6.5 0 1,0 1486.0,1425.5" stroke="#3b3b3b" stroke-width="3.2" stroke-linecap="butt"/><circle cx="1479.7" cy="1427" r="2.2" fill="#3b3b3b" stroke="none"/><line x1="1479.7" y1="1427" x2="1492.7" y2="1414" stroke="#3b3b3b" stroke-width="2.4"/><path d="M1490.2,1410.5 L1496.7,1410.5 L1496.2,1417 L1493.2,1414 Z" fill="#3b3b3b" stroke="#3b3b3b" stroke-width="1"/><path d="M1843.2,1418.5 A13,13 0 1,0 1846.2,1424" stroke="#3b3b3b" stroke-width="3.6" stroke-linecap="butt"/><path d="M1838.2,1421.5 A6.5,6.5 0 1,0 1840.0,1425.5" stroke="#3b3b3b" stroke-width="3.2" stroke-linecap="butt"/><circle cx="1833.7" cy="1427" r="2.2" fill="#3b3b3b" stroke="none"/><line x1="1833.7" y1="1427" x2="1846.7" y2="1414" stroke="#3b3b3b" stroke-width="2.4"/><path d="M1844.2,1410.5 L1850.7,1410.5 L1850.2,1417 L1847.2,1414 Z" fill="#3b3b3b" stroke="#3b3b3b" stroke-width="1"/><path d="M2197.2,1418.5 A13,13 0 1,0 2200.2,1424" stroke="#3b3b3b" stroke-width="3.6" stroke-linecap="butt"/><path d="M2192.2,1421.5 A6.5,6.5 0 1,0 2194.0,1425.5" stroke="#3b3b3b" stroke-width="3.2" stroke-linecap="butt"/><circle cx="2187.7" cy="1427" r="2.2" fill="#3b3b3b" stroke="none"/><line x1="2187.7" y1="1427" x2="2200.7" y2="1414" stroke="#3b3b3b" stroke-width="2.4"/><path d="M2198.2,1410.5 L2204.7,1410.5 L2204.2,1417 L2201.2,1414 Z" fill="#3b3b3b" stroke="#3b3b3b" stroke-width="1"/><path d="M2465.4,1421 H2484.4 L2474.9,1433 Z" fill="#3b3b3b" stroke="none"/><path d="M2508.7,1434.6 H2541 M2524.8,1419 V1450.3" stroke="#1f1f1f" stroke-width="2" stroke-linecap="butt"/><path d="M2603.10,1435.00 L2603.10,1435.18 L2603.09,1435.36 L2603.09,1435.54 L2603.07,1435.72 L2603.06,1435.90 L2603.04,1436.08 L2603.02,1436.26 L2603.00,1436.43 L2602.97,1436.61 L2602.94,1436.79 L2602.91,1436.97 L2602.99,1437.17 L2603.29,1437.42 L2603.76,1437.73 L2604.35,1438.09 L2604.96,1438.49 L2605.52,1438.89 L2605.96,1439.27 L2606.21,1439.62 L2606.24,1439.89 L2606.15,1440.12 L2606.06,1440.36 L2605.96,1440.59 L2605.86,1440.82 L2605.76,1441.04 L2605.65,1441.27 L2605.54,1441.49 L2605.43,1441.71 L2605.31,1441.93 L2605.18,1442.15 L2605.06,1442.37 L2604.93,1442.58 L2604.79,1442.79 L2604.66,1443.00 L2604.51,1443.20 L2604.37,1443.41 L2604.22,1443.61 L2604.07,1443.80 L2603.91,1444.00 L2603.75,1444.19 L2603.50,1444.30 L2603.08,1444.26 L2602.53,1444.07 L2601.90,1443.79 L2601.25,1443.45 L2600.65,1443.13 L2600.14,1442.88 L2599.77,1442.74 L2599.56,1442.77 L2599.42,1442.89 L2599.28,1443.00 L2599.14,1443.12 L2599.00,1443.23 L2598.85,1443.33 L2598.71,1443.44 L2598.56,1443.54 L2598.41,1443.64 L2598.26,1443.73 L2598.10,1443.83 L2597.95,1443.92 L2597.79,1444.01 L2597.64,1444.09 L2597.48,1444.18 L2597.32,1444.26 L2597.15,1444.33 L2596.99,1444.41 L2596.82,1444.48 L2596.66,1444.55 L2596.49,1444.62 L2596.32,1444.68 L2596.15,1444.74 L2596.02,1444.91 L2595.95,1445.30 L2595.91,1445.86 L2595.89,1446.55 L2595.86,1447.27 L2595.79,1447.96 L2595.68,1448.53 L2595.51,1448.92 L2595.28,1449.08 L2595.04,1449.12 L2594.79,1449.16 L2594.54,1449.19 L2594.29,1449.22 L2594.05,1449.25 L2593.80,1449.27 L2593.55,1449.28 L2593.30,1449.29 L2593.05,1449.30 L2592.80,1449.30 L2592.55,1449.30 L2592.30,1449.29 L2592.05,1449.28 L2591.80,1449.27 L2591.55,1449.25 L2591.31,1449.22 L2591.06,1449.19 L2590.81,1449.16 L2590.56,1449.12 L2590.32,1449.08 L2590.09,1448.92 L2589.92,1448.53 L2589.81,1447.96 L2589.74,1447.27 L2589.71,1446.55 L2589.69,1445.86 L2589.65,1445.30 L2589.58,1444.91 L2589.45,1444.74 L2589.28,1444.68 L2589.11,1444.62 L2588.94,1444.55 L2588.78,1444.48 L2588.61,1444.41 L2588.45,1444.33 L2588.28,1444.26 L2588.12,1444.18 L2587.96,1444.09 L2587.81,1444.01 L2587.65,1443.92 L2587.50,1443.83 L2587.34,1443.73 L2587.19,1443.64 L2587.04,1443.54 L2586.89,1443.44 L2586.75,1443.33 L2586.60,1443.23 L2586.46,1443.12 L2586.32,1443.00 L2586.18,1442.89 L2586.04,1442.77 L2585.83,1442.74 L2585.46,1442.88 L2584.95,1443.13 L2584.35,1443.45 L2583.70,1443.79 L2583.07,1444.07 L2582.52,1444.26 L2582.10,1444.30 L2581.85,1444.19 L2581.69,1444.00 L2581.53,1443.80 L2581.38,1443.61 L2581.23,1443.41 L2581.09,1443.20 L2580.94,1443.00 L2580.81,1442.79 L2580.67,1442.58 L2580.54,1442.37 L2580.42,1442.15 L2580.29,1441.93 L2580.17,1441.71 L2580.06,1441.49 L2579.95,1441.27 L2579.84,1441.04 L2579.74,1440.82 L2579.64,1440.59 L2579.54,1440.36 L2579.45,1440.12 L2579.36,1439.89 L2579.39,1439.62 L2579.64,1439.27 L2580.08,1438.89 L2580.64,1438.49 L2581.25,1438.09 L2581.84,1437.73 L2582.31,1437.42 L2582.61,1437.17 L2582.69,1436.97 L2582.66,1436.79 L2582.63,1436.61 L2582.60,1436.43 L2582.58,1436.26 L2582.56,1436.08 L2582.54,1435.90 L2582.53,1435.72 L2582.51,1435.54 L2582.51,1435.36 L2582.50,1435.18 L2582.50,1435.00 L2582.50,1434.82 L2582.51,1434.64 L2582.51,1434.46 L2582.53,1434.28 L2582.54,1434.10 L2582.56,1433.92 L2582.58,1433.74 L2582.60,1433.57 L2582.63,1433.39 L2582.66,1433.21 L2582.69,1433.03 L2582.61,1432.83 L2582.31,1432.58 L2581.84,1432.27 L2581.25,1431.91 L2580.64,1431.51 L2580.08,1431.11 L2579.64,1430.73 L2579.39,1430.38 L2579.36,1430.11 L2579.45,1429.88 L2579.54,1429.64 L2579.64,1429.41 L2579.74,1429.18 L2579.84,1428.96 L2579.95,1428.73 L2580.06,1428.51 L2580.17,1428.29 L2580.29,1428.07 L2580.42,1427.85 L2580.54,1427.63 L2580.67,1427.42 L2580.81,1427.21 L2580.94,1427.00 L2581.09,1426.80 L2581.23,1426.59 L2581.38,1426.39 L2581.53,1426.20 L2581.69,1426.00 L2581.85,1425.81 L2582.10,1425.70 L2582.52,1425.74 L2583.07,1425.93 L2583.70,1426.21 L2584.35,1426.55 L2584.95,1426.87 L2585.46,1427.12 L2585.83,1427.26 L2586.04,1427.23 L2586.18,1427.11 L2586.32,1427.00 L2586.46,1426.88 L2586.60,1426.77 L2586.75,1426.67 L2586.89,1426.56 L2587.04,1426.46 L2587.19,1426.36 L2587.34,1426.27 L2587.50,1426.17 L2587.65,1426.08 L2587.81,1425.99 L2587.96,1425.91 L2588.12,1425.82 L2588.28,1425.74 L2588.45,1425.67 L2588.61,1425.59 L2588.78,1425.52 L2588.94,1425.45 L2589.11,1425.38 L2589.28,1425.32 L2589.45,1425.26 L2589.58,1425.09 L2589.65,1424.70 L2589.69,1424.14 L2589.71,1423.45 L2589.74,1422.73 L2589.81,1422.04 L2589.92,1421.47 L2590.09,1421.08 L2590.32,1420.92 L2590.56,1420.88 L2590.81,1420.84 L2591.06,1420.81 L2591.31,1420.78 L2591.55,1420.75 L2591.80,1420.73 L2592.05,1420.72 L2592.30,1420.71 L2592.55,1420.70 L2592.80,1420.70 L2593.05,1420.70 L2593.30,1420.71 L2593.55,1420.72 L2593.80,1420.73 L2594.05,1420.75 L2594.29,1420.78 L2594.54,1420.81 L2594.79,1420.84 L2595.04,1420.88 L2595.28,1420.92 L2595.51,1421.08 L2595.68,1421.47 L2595.79,1422.04 L2595.86,1422.73 L2595.89,1423.45 L2595.91,1424.14 L2595.95,1424.70 L2596.02,1425.09 L2596.15,1425.26 L2596.32,1425.32 L2596.49,1425.38 L2596.66,1425.45 L2596.82,1425.52 L2596.99,1425.59 L2597.15,1425.67 L2597.32,1425.74 L2597.48,1425.82 L2597.64,1425.91 L2597.79,1425.99 L2597.95,1426.08 L2598.10,1426.17 L2598.26,1426.27 L2598.41,1426.36 L2598.56,1426.46 L2598.71,1426.56 L2598.85,1426.67 L2599.00,1426.77 L2599.14,1426.88 L2599.28,1427.00 L2599.42,1427.11 L2599.56,1427.23 L2599.77,1427.26 L2600.14,1427.12 L2600.65,1426.87 L2601.25,1426.55 L2601.90,1426.21 L2602.53,1425.93 L2603.08,1425.74 L2603.50,1425.70 L2603.75,1425.81 L2603.91,1426.00 L2604.07,1426.20 L2604.22,1426.39 L2604.37,1426.59 L2604.51,1426.80 L2604.66,1427.00 L2604.79,1427.21 L2604.93,1427.42 L2605.06,1427.63 L2605.18,1427.85 L2605.31,1428.07 L2605.43,1428.29 L2605.54,1428.51 L2605.65,1428.73 L2605.76,1428.96 L2605.86,1429.18 L2605.96,1429.41 L2606.06,1429.64 L2606.15,1429.88 L2606.24,1430.11 L2606.21,1430.38 L2605.96,1430.73 L2605.52,1431.11 L2604.96,1431.51 L2604.35,1431.91 L2603.76,1432.27 L2603.29,1432.58 L2602.99,1432.83 L2602.91,1433.03 L2602.94,1433.21 L2602.97,1433.39 L2603.00,1433.57 L2603.02,1433.74 L2603.04,1433.92 L2603.06,1434.10 L2603.07,1434.28 L2603.09,1434.46 L2603.09,1434.64 L2603.10,1434.82Z" stroke="#2a2a2a" stroke-width="2"/><circle cx="2592.8" cy="1435" r="3.8" stroke="#2a2a2a" stroke-width="2"/><path d="M2658,1448 H2652.5 Q2648,1448 2648,1443.5 V1422 Q2648,1417.6 2652.5,1417.6 H2665.8 Q2670.3,1417.6 2670.3,1422 V1431 M2653.6,1426 H2665 M2653.6,1433.8 H2660" stroke="#2a2a2a" stroke-width="2"/><circle cx="2667.7" cy="1441.9" r="9.8" fill="#fff" stroke="none"/><circle cx="2667.7" cy="1441.9" r="8.8" fill="#117865" stroke="none"/><path d="M2663.3,1441.9 H2672.1 M2667.7,1437.5 V1446.3" stroke="#fff" stroke-width="2"/><rect x="2729.6" y="1427.5" width="22.5" height="22.6" rx="5" stroke="#1f1f1f" stroke-width="2.2"/><path d="M2721.7,1440 V1431 Q2721.7,1419.7 2733,1419.7 H2742.5 M2725.4,1445 V1435 Q2725.4,1423.9 2736.5,1423.9 H2746.5" stroke="#1f1f1f" stroke-width="1.8"/><path d="M25.5,1468.8 L33,1464 V1473.6 Z" fill="#c0c0c0" stroke="none"/><rect x="41" y="1463" width="2403" height="11.7" rx="5.8" fill="#c2c2c2" stroke="none"/><path d="M2485,1469.2 L2477,1464 V1474.4 Z" fill="#c0c0c0" stroke="none"/><path d="M2602,48 L2596,54.5 L2602,61 M2609,48 L2603,54.5 L2609,61" stroke="#3b3b3b" stroke-width="1.5"/><path d="M2672,48 L2666,54.5 L2672,61 M2679,48 L2673,54.5 L2679,61" stroke="#3b3b3b" stroke-width="1.5"/><path d="M2734.5,48 L2728.5,54.5 L2734.5,61 M2741.5,48 L2735.5,54.5 L2741.5,61" stroke="#3b3b3b" stroke-width="1.5"/><path d="M2731,96 A12,12 0 0,1 2754,86.5 M2755.8,80.5 V86.5 H2749.8 M2754.6,92 A12,12 0 0,1 2731.6,101.5 M2730.4,106.5 V100.5 H2736.4" stroke="#1f1f1f" stroke-width="2.2" stroke-linecap="butt"/></svg>
<div class="b" style="left:27px;top:971px;width:195px;height:288px;background:#fff;box-shadow:0 2px 6px rgba(0,0,0,0.22),0 0 2px rgba(0,0,0,0.12)"></div>
<div class="b" style="left:228px;top:918px;width:277px;height:433px;background:#fff;box-shadow:0 2px 6px rgba(0,0,0,0.22),0 0 2px rgba(0,0,0,0.12)"></div>
<div class="b" style="left:222px;top:971px;width:6px;height:288px;background:rgba(0,0,0,0.06)"></div>
<div class="b" style="left:38px;top:1159.5px;width:171px;height:51px;border:2.5px solid #e8131c;border-radius:7px;box-shadow:inset 0 0 4px rgba(0,0,0,0.18)"></div>
<div class="b" style="left:239px;top:916.7px;width:234px;height:50.5px;border:2.5px solid #e8131c;border-radius:7px;box-shadow:inset 0 0 4px rgba(0,0,0,0.18)"></div>
<div class="t" style="left:103.40px;top:984.78px;font-size:22px;font-weight:normal;color:#2b2b2b;transform:scaleX(0.8457);transform-origin:0 0;">Select</div>
<div class="t" style="left:103.40px;top:1032.58px;font-size:22px;font-weight:normal;color:#2b2b2b;transform:scaleX(0.8497);transform-origin:0 0;">Expand</div>
<div class="t" style="left:103.40px;top:1080.68px;font-size:22px;font-weight:normal;color:#2b2b2b;transform:scaleX(0.8655);transform-origin:0 0;">Collapse</div>
<div class="t" style="left:103.40px;top:1128.38px;font-size:22px;font-weight:normal;color:#2b2b2b;transform:scaleX(0.8855);transform-origin:0 0;">Insert</div>
<div class="t" style="left:103.40px;top:1176.48px;font-size:22px;font-weight:normal;color:#2b2b2b;transform:scaleX(0.8844);transform-origin:0 0;">Actions</div>
<div class="t" style="left:103.40px;top:1224.58px;font-size:22px;font-weight:normal;color:#2b2b2b;transform:scaleX(0.9274);transform-origin:0 0;">Audit</div>
<div class="t" style="left:304.20px;top:931.58px;font-size:22px;font-weight:normal;color:#2b2b2b;transform:scaleX(0.8654);transform-origin:0 0;">Add Row Break</div>
<div class="t" style="left:304.20px;top:980.28px;font-size:22px;font-weight:normal;color:#2b2b2b;transform:scaleX(0.9023);transform-origin:0 0;">Hide Icon for level</div>
<div class="t" style="left:304.20px;top:1028.38px;font-size:22px;font-weight:normal;color:#2b2b2b;transform:scaleX(0.9201);transform-origin:0 0;">Hide icon &amp; children</div>
<div class="t" style="left:304.20px;top:1076.08px;font-size:22px;font-weight:normal;color:#2b2b2b;transform:scaleX(0.8328);transform-origin:0 0;">Freeze Row</div>
<div class="t" style="left:304.20px;top:1123.88px;font-size:22px;font-weight:normal;color:#2b2b2b;transform:scaleX(0.8702);transform-origin:0 0;">Hide Row</div>
<div class="t" style="left:304.20px;top:1171.88px;font-size:22px;font-weight:normal;color:#2b2b2b;transform:scaleX(0.8851);transform-origin:0 0;">Skip Row(Alt+G)</div>
<div class="t" style="left:304.20px;top:1219.68px;font-size:22px;font-weight:normal;color:#2b2b2b;transform:scaleX(0.8817);transform-origin:0 0;">Skip &amp; Show Row</div>
<div class="t" style="left:304.20px;top:1267.78px;font-size:22px;font-weight:normal;color:#2b2b2b;transform:scaleX(0.8886);transform-origin:0 0;">Disable Subtotal</div>
<div class="t" style="left:304.20px;top:1316.28px;font-size:22px;font-weight:normal;color:#2b2b2b;transform:scaleX(0.8981);transform-origin:0 0;">Set Subtotal below</div>
<svg class="b" style="left:0;top:0" width="2793" height="1496" viewBox="0 0 2793 1496" fill="none" stroke="#3b3b3b" stroke-width="2" stroke-linecap="round" stroke-linejoin="round"><polyline points="184.5,984 196,995 184.5,1006" stroke="#2b2b2b" stroke-width="1.8" stroke-linecap="butt"/><polyline points="184.5,1032 196,1043 184.5,1054" stroke="#2b2b2b" stroke-width="1.8" stroke-linecap="butt"/><polyline points="184.5,1080 196,1091 184.5,1102" stroke="#2b2b2b" stroke-width="1.8" stroke-linecap="butt"/><polyline points="184.5,1128 196,1139 184.5,1150" stroke="#2b2b2b" stroke-width="1.8" stroke-linecap="butt"/><polyline points="184.5,1176 196,1187 184.5,1198" stroke="#2b2b2b" stroke-width="1.8" stroke-linecap="butt"/><rect x="60.5" y="988" width="22" height="22" rx="5" stroke="#3b3b3b" stroke-width="2"/><path d="M65.2,998.6 L70,1002.5 L77.3,994.4" stroke="#117865" stroke-width="2.2"/><path d="M52,1001 V993 Q52,979.7 64.5,979.7 H71.5" stroke="#3b3b3b" stroke-width="1.8"/><path d="M56.4,1005 V996 Q56.4,983.6 68.5,983.6 H76.5" stroke="#3b3b3b" stroke-width="1.8"/><path d="M51.6,1031.7 H82.6 M67.5,1038 H82.6 M67.5,1045.9 H82.6 M67.5,1053.8 H82.6" stroke="#3b3b3b" stroke-width="2" stroke-linecap="butt"/><path d="M51.6,1043.3 L56.8,1037.8 L62.3,1043.3 M51.6,1048.5 L56.8,1054.3 L62.3,1048.5" stroke="#3b3b3b" stroke-width="1.8"/><path d="M51.6,1079.5 H82.6 M67.5,1085.8 H82.6 M67.5,1093.7 H82.6 M67.5,1101.9 H82.6" stroke="#3b3b3b" stroke-width="2" stroke-linecap="butt"/><path d="M51.6,1085.3 L56.8,1091.1 L62.3,1085.3 M51.6,1102.3 L56.8,1096.7 L62.3,1102.3" stroke="#3b3b3b" stroke-width="1.8"/><path d="M51,1137.6 H81 M65.7,1122.9 V1152.3" stroke="#117865" stroke-width="2" stroke-linecap="butt"/><path d="M78.30,1187.00 L78.30,1187.20 L78.29,1187.40 L78.28,1187.60 L78.27,1187.80 L78.26,1188.00 L78.24,1188.20 L78.21,1188.40 L78.19,1188.60 L78.16,1188.80 L78.13,1189.00 L78.09,1189.19 L78.17,1189.42 L78.46,1189.69 L78.93,1190.02 L79.50,1190.40 L80.11,1190.82 L80.67,1191.24 L81.10,1191.65 L81.34,1192.01 L81.37,1192.30 L81.27,1192.55 L81.17,1192.81 L81.07,1193.06 L80.96,1193.30 L80.85,1193.55 L80.73,1193.79 L80.61,1194.04 L80.49,1194.28 L80.36,1194.51 L80.22,1194.75 L80.09,1194.98 L79.94,1195.21 L79.80,1195.44 L79.65,1195.67 L79.50,1195.89 L79.34,1196.11 L79.18,1196.33 L79.01,1196.54 L78.85,1196.75 L78.67,1196.96 L78.41,1197.09 L77.97,1197.06 L77.40,1196.89 L76.76,1196.62 L76.10,1196.30 L75.48,1195.99 L74.96,1195.75 L74.58,1195.64 L74.34,1195.68 L74.19,1195.81 L74.04,1195.94 L73.88,1196.06 L73.72,1196.18 L73.56,1196.30 L73.40,1196.42 L73.23,1196.53 L73.06,1196.64 L72.89,1196.75 L72.72,1196.86 L72.55,1196.96 L72.38,1197.06 L72.20,1197.15 L72.02,1197.25 L71.84,1197.34 L71.66,1197.42 L71.48,1197.51 L71.29,1197.59 L71.11,1197.66 L70.92,1197.74 L70.73,1197.81 L70.54,1197.87 L70.39,1198.05 L70.30,1198.44 L70.25,1199.02 L70.20,1199.70 L70.15,1200.44 L70.06,1201.13 L69.93,1201.70 L69.73,1202.10 L69.49,1202.26 L69.22,1202.31 L68.96,1202.35 L68.69,1202.38 L68.42,1202.42 L68.15,1202.44 L67.88,1202.46 L67.61,1202.48 L67.34,1202.49 L67.07,1202.50 L66.80,1202.50 L66.53,1202.50 L66.26,1202.49 L65.99,1202.48 L65.72,1202.46 L65.45,1202.44 L65.18,1202.42 L64.91,1202.38 L64.64,1202.35 L64.38,1202.31 L64.11,1202.26 L63.87,1202.10 L63.67,1201.70 L63.54,1201.13 L63.45,1200.44 L63.40,1199.70 L63.35,1199.02 L63.30,1198.44 L63.21,1198.05 L63.06,1197.87 L62.87,1197.81 L62.68,1197.74 L62.49,1197.66 L62.31,1197.59 L62.12,1197.51 L61.94,1197.42 L61.76,1197.34 L61.58,1197.25 L61.40,1197.15 L61.22,1197.06 L61.05,1196.96 L60.88,1196.86 L60.71,1196.75 L60.54,1196.64 L60.37,1196.53 L60.20,1196.42 L60.04,1196.30 L59.88,1196.18 L59.72,1196.06 L59.56,1195.94 L59.41,1195.81 L59.26,1195.68 L59.02,1195.64 L58.64,1195.75 L58.12,1195.99 L57.50,1196.30 L56.84,1196.62 L56.20,1196.89 L55.63,1197.06 L55.19,1197.09 L54.93,1196.96 L54.75,1196.75 L54.59,1196.54 L54.42,1196.33 L54.26,1196.11 L54.10,1195.89 L53.95,1195.67 L53.80,1195.44 L53.66,1195.21 L53.51,1194.98 L53.38,1194.75 L53.24,1194.51 L53.11,1194.28 L52.99,1194.04 L52.87,1193.79 L52.75,1193.55 L52.64,1193.30 L52.53,1193.06 L52.43,1192.81 L52.33,1192.55 L52.23,1192.30 L52.26,1192.01 L52.50,1191.65 L52.93,1191.24 L53.49,1190.82 L54.10,1190.40 L54.67,1190.02 L55.14,1189.69 L55.43,1189.42 L55.51,1189.19 L55.47,1189.00 L55.44,1188.80 L55.41,1188.60 L55.39,1188.40 L55.36,1188.20 L55.34,1188.00 L55.33,1187.80 L55.32,1187.60 L55.31,1187.40 L55.30,1187.20 L55.30,1187.00 L55.30,1186.80 L55.31,1186.60 L55.32,1186.40 L55.33,1186.20 L55.34,1186.00 L55.36,1185.80 L55.39,1185.60 L55.41,1185.40 L55.44,1185.20 L55.47,1185.00 L55.51,1184.81 L55.43,1184.58 L55.14,1184.31 L54.67,1183.98 L54.10,1183.60 L53.49,1183.18 L52.93,1182.76 L52.50,1182.35 L52.26,1181.99 L52.23,1181.70 L52.33,1181.45 L52.43,1181.19 L52.53,1180.94 L52.64,1180.70 L52.75,1180.45 L52.87,1180.21 L52.99,1179.96 L53.11,1179.72 L53.24,1179.49 L53.38,1179.25 L53.51,1179.02 L53.66,1178.79 L53.80,1178.56 L53.95,1178.33 L54.10,1178.11 L54.26,1177.89 L54.42,1177.67 L54.59,1177.46 L54.75,1177.25 L54.93,1177.04 L55.19,1176.91 L55.63,1176.94 L56.20,1177.11 L56.84,1177.38 L57.50,1177.70 L58.12,1178.01 L58.64,1178.25 L59.02,1178.36 L59.26,1178.32 L59.41,1178.19 L59.56,1178.06 L59.72,1177.94 L59.88,1177.82 L60.04,1177.70 L60.20,1177.58 L60.37,1177.47 L60.54,1177.36 L60.71,1177.25 L60.88,1177.14 L61.05,1177.04 L61.22,1176.94 L61.40,1176.85 L61.58,1176.75 L61.76,1176.66 L61.94,1176.58 L62.12,1176.49 L62.31,1176.41 L62.49,1176.34 L62.68,1176.26 L62.87,1176.19 L63.06,1176.13 L63.21,1175.95 L63.30,1175.56 L63.35,1174.98 L63.40,1174.30 L63.45,1173.56 L63.54,1172.87 L63.67,1172.30 L63.87,1171.90 L64.11,1171.74 L64.38,1171.69 L64.64,1171.65 L64.91,1171.62 L65.18,1171.58 L65.45,1171.56 L65.72,1171.54 L65.99,1171.52 L66.26,1171.51 L66.53,1171.50 L66.80,1171.50 L67.07,1171.50 L67.34,1171.51 L67.61,1171.52 L67.88,1171.54 L68.15,1171.56 L68.42,1171.58 L68.69,1171.62 L68.96,1171.65 L69.22,1171.69 L69.49,1171.74 L69.73,1171.90 L69.93,1172.30 L70.06,1172.87 L70.15,1173.56 L70.20,1174.30 L70.25,1174.98 L70.30,1175.56 L70.39,1175.95 L70.54,1176.13 L70.73,1176.19 L70.92,1176.26 L71.11,1176.34 L71.29,1176.41 L71.48,1176.49 L71.66,1176.58 L71.84,1176.66 L72.02,1176.75 L72.20,1176.85 L72.38,1176.94 L72.55,1177.04 L72.72,1177.14 L72.89,1177.25 L73.06,1177.36 L73.23,1177.47 L73.40,1177.58 L73.56,1177.70 L73.72,1177.82 L73.88,1177.94 L74.04,1178.06 L74.19,1178.19 L74.34,1178.32 L74.58,1178.36 L74.96,1178.25 L75.48,1178.01 L76.10,1177.70 L76.76,1177.38 L77.40,1177.11 L77.97,1176.94 L78.41,1176.91 L78.67,1177.04 L78.85,1177.25 L79.01,1177.46 L79.18,1177.67 L79.34,1177.89 L79.50,1178.11 L79.65,1178.33 L79.80,1178.56 L79.94,1178.79 L80.09,1179.02 L80.22,1179.25 L80.36,1179.49 L80.49,1179.72 L80.61,1179.96 L80.73,1180.21 L80.85,1180.45 L80.96,1180.70 L81.07,1180.94 L81.17,1181.19 L81.27,1181.45 L81.37,1181.70 L81.34,1181.99 L81.10,1182.35 L80.67,1182.76 L80.11,1183.18 L79.50,1183.60 L78.93,1183.98 L78.46,1184.31 L78.17,1184.58 L78.09,1184.81 L78.13,1185.00 L78.16,1185.20 L78.19,1185.40 L78.21,1185.60 L78.24,1185.80 L78.26,1186.00 L78.27,1186.20 L78.28,1186.40 L78.29,1186.60 L78.30,1186.80Z" stroke="#1f1f1f" stroke-width="2"/><circle cx="66.8" cy="1187" r="4.2" stroke="#1f1f1f" stroke-width="2"/><path d="M56,1234 V1224 Q56,1220.5 59.5,1220.5 H68 L77.5,1229.5 V1246 Q77.5,1249.5 74,1249.5 H70 M68,1220.5 V1226 Q68,1229.5 71.5,1229.5 H77.5" stroke="#3b3b3b" stroke-width="1.8"/><circle cx="58.6" cy="1241.3" r="5.6" stroke="#117865" stroke-width="1.8"/><line x1="62.6" y1="1245.5" x2="68.2" y2="1251.4" stroke="#117865" stroke-width="1.8"/><path d="M254.1,927 V930.5 Q254.1,933.4 257,933.4 H278.8 Q281.7,933.4 281.7,930.5 V927 M263.3,927 V933 M272.8,927 V933" stroke="#3b3b3b" stroke-width="1.8" stroke-linecap="butt"/><line x1="252.5" y1="943" x2="283.5" y2="943" stroke="#117865" stroke-width="1.8" stroke-dasharray="3.5 2.8" stroke-linecap="butt"/><path d="M254.1,958.1 V954.5 Q254.1,951.5 257,951.5 H278.8 Q281.7,951.5 281.7,954.5 V958.1 M263.3,952 V958.1 M272.8,952 V958.1" stroke="#3b3b3b" stroke-width="1.8" stroke-linecap="butt"/><rect x="253" y="975.8" width="26.6" height="5" rx="2.5" stroke="#3b3b3b" stroke-width="1.8"/><path d="M279.6,986.4 Q279.6,985.5 278,985.5 H256 Q253,985.5 253,988.5 Q253,991.5 256,991.5 H265" stroke="#3b3b3b" stroke-width="1.8"/><path d="M266.5,998 Q274.5,988 282.5,998" stroke="#117865" stroke-width="1.7"/><circle cx="274.5" cy="999" r="2.6" stroke="#117865" stroke-width="1.7"/><line x1="267.5" y1="990" x2="283.5" y2="1007" stroke="#117865" stroke-width="1.7"/><rect x="253" y="1119.6" width="26.6" height="5" rx="2.5" stroke="#3b3b3b" stroke-width="1.8"/><path d="M279.6,1130.1999999999998 Q279.6,1129.3 278,1129.3 H256 Q253,1129.3 253,1132.3 Q253,1135.3 256,1135.3 H265" stroke="#3b3b3b" stroke-width="1.8"/><path d="M266.5,1141.8 Q274.5,1131.8 282.5,1141.8" stroke="#117865" stroke-width="1.7"/><circle cx="274.5" cy="1142.8" r="2.6" stroke="#117865" stroke-width="1.7"/><line x1="267.5" y1="1133.8" x2="283.5" y2="1150.8" stroke="#117865" stroke-width="1.7"/><path d="M265,1052 H257 Q254,1052 254,1049 V1029 Q254,1026 257,1026 H278.7 Q281.7,1026 281.7,1029 V1040 M260.5,1037.7 H275.3" stroke="#3b3b3b" stroke-width="1.8"/><path d="M268,1046 Q276,1036 284,1046" stroke="#117865" stroke-width="1.7"/><circle cx="276" cy="1047" r="2.6" stroke="#117865" stroke-width="1.7"/><line x1="269" y1="1038" x2="285" y2="1055" stroke="#117865" stroke-width="1.7"/><path d="M264,1083 H272.8 V1091.7 H264 Z" fill="#d6ece5" stroke="none"/><path d="M256,1083 H264 V1091.7 H256 Z" fill="#d6ece5" stroke="none"/><path d="M268,1074 H257 Q254.1,1074 254.1,1077 V1097.2 Q254.1,1100.2 257,1100.2 H278.7 Q281.7,1100.2 281.7,1097.2 V1088 M254.1,1082.9 H268 M254.1,1091.7 H281.7 M264,1074 V1100.2 M272.8,1087 V1100.2" stroke="#3b3b3b" stroke-width="1.8" stroke-linecap="butt"/><path d="M277,1068.5 V1086.5 M269.2,1073 L284.8,1082 M269.2,1082 L284.8,1073" stroke="#117865" stroke-width="2.2" stroke-linecap="butt"/><path d="M258.3,1181.3 Q259,1171.7 267.8,1171.7 Q274,1171.7 277.4,1177.8 M277.4,1171 V1178 H270.5" stroke="#117865" stroke-width="1.9"/><path d="M254.8,1186.5 H281.7 M254.8,1191.4 H281.7 M254.8,1196.1 H281.7" stroke="#3b3b3b" stroke-width="1.9" stroke-linecap="butt"/><path d="M256.5,1230 Q257,1219 268,1219 Q276,1219 280,1225.7 M280,1218.5 V1226 H272.5" stroke="#117865" stroke-width="1.9"/><path d="M254,1234.9 H267.8 M254,1239.6 H266 M254,1244.3 H265" stroke="#3b3b3b" stroke-width="1.9" stroke-linecap="butt"/><path d="M269.5,1240.5 Q274.8,1234.5 280.5,1240.5" stroke="#3b3b3b" stroke-width="1.6"/><circle cx="274.8" cy="1242.3" r="1.8" stroke="#3b3b3b" stroke-width="1.5"/><path d="M268,1292.6 H258 Q254.8,1292.6 254.8,1289.4 V1269 Q254.8,1265.7 258,1265.7 H278.5 Q281.7,1265.7 281.7,1269 V1277" stroke="#3b3b3b" stroke-width="1.8"/><path d="M275.7,1272.2 H261 L268,1279 L261,1286 H266" stroke="#3b3b3b" stroke-width="1.8" stroke-linecap="butt" stroke-linejoin="miter"/><circle cx="277" cy="1287.4" r="10.5" fill="#fff" stroke="none"/><circle cx="277" cy="1287.4" r="9.3" fill="#117865" stroke="none"/><line x1="272" y1="1287.4" x2="282" y2="1287.4" stroke="#fff" stroke-width="2.4"/><path d="M268,1340.3999999999999 H258 Q254.8,1340.3999999999999 254.8,1337.2 V1316.8 Q254.8,1313.5 258,1313.5 H278.5 Q281.7,1313.5 281.7,1316.8 V1324.8" stroke="#3b3b3b" stroke-width="1.8"/><path d="M275.7,1320.0 H261 L268,1326.8 L261,1333.8 H266" stroke="#3b3b3b" stroke-width="1.8" stroke-linecap="butt" stroke-linejoin="miter"/><circle cx="277" cy="1335.2" r="10.5" fill="#fff" stroke="none"/><circle cx="277" cy="1335.2" r="9.3" fill="#117865" stroke="none"/><path d="M277,1329.8 V1339.8 M273,1335.8 L277,1339.8 L281,1335.8" stroke="#fff" stroke-width="2"/></svg>
</body></html>
